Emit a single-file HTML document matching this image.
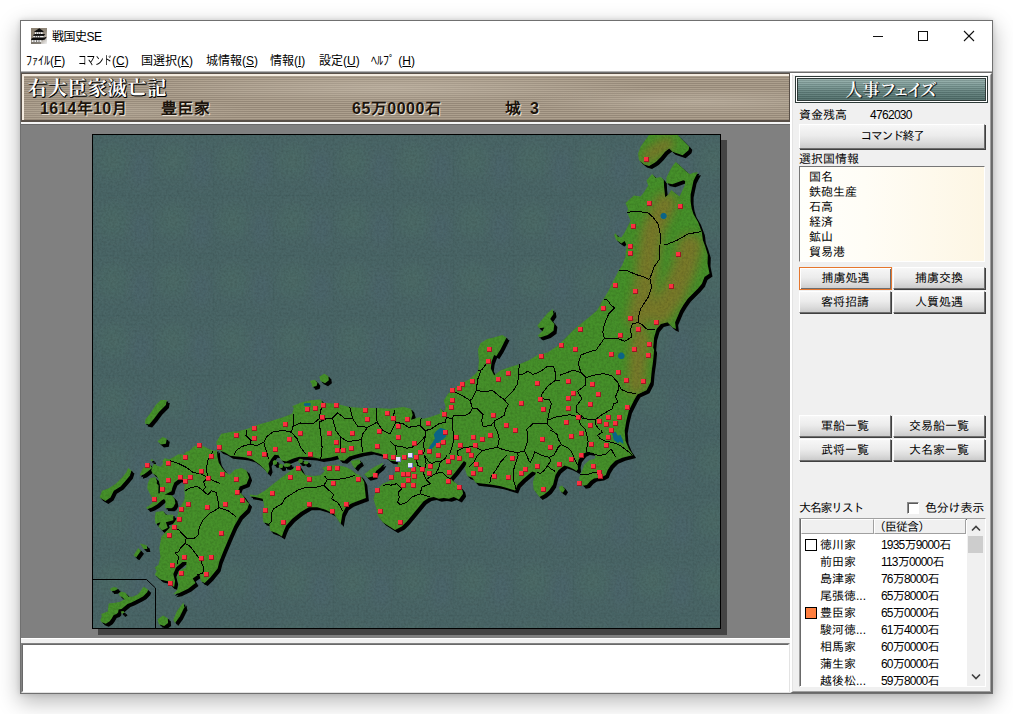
<!DOCTYPE html>
<html lang="ja">
<head>
<meta charset="utf-8">
<title>戦国史SE</title>
<style>
html,body{margin:0;padding:0;}
body{width:1013px;height:714px;background:#fff;overflow:hidden;position:relative;
 font-family:"Liberation Sans","IPAGothic","Noto Sans CJK JP",sans-serif;font-size:12px;line-height:12px;color:#000;}
.abs{position:absolute;}
#win{position:absolute;left:20px;top:20px;width:971px;height:672px;border:1px solid #707070;background:#fff;
 box-shadow:0 7px 20px 1px rgba(0,0,0,.28),0 0 5px rgba(0,0,0,.14);}
#c{position:absolute;left:-21px;top:-21px;width:1013px;height:714px;}
#title{left:52px;top:30px;font-size:12px;line-height:14px;letter-spacing:-.5px;font-family:"Liberation Sans","Noto Sans CJK JP",sans-serif;}
.menu{top:54px;font-size:12px;line-height:14px;white-space:nowrap;font-family:"Liberation Sans","Noto Sans CJK JP",sans-serif;}
.menu u{text-decoration:underline;}
#strip{left:21px;top:73px;width:770px;height:49px;box-sizing:border-box;overflow:hidden;
 background:
  radial-gradient(ellipse 260px 16px at 48% 30%,rgba(205,195,180,.5),rgba(205,195,180,0) 100%),
  radial-gradient(ellipse 140px 12px at 12% 80%,rgba(195,185,170,.3),rgba(195,185,170,0) 100%),
  radial-gradient(ellipse 180px 14px at 88% 60%,rgba(200,190,175,.45),rgba(200,190,175,0) 100%),
  repeating-linear-gradient(180deg,#ada08e 0,#ada08e 1px,#958878 1px,#958878 2px);
 border:solid #595048;border-width:1px 2px 2px 1px;}
#strip:before{content:"";position:absolute;left:0;top:0;right:0;bottom:0;border:solid #f3ebdf;border-width:2px 0 0 2px;}
.sh1{font-family:"Liberation Serif","Noto Serif CJK SC",serif;font-weight:700;font-size:19px;line-height:20px;color:#fff;
 text-shadow:1px 1px 0 #000,1px 0 0 #000,0 1px 0 #000;white-space:nowrap;}
.sh2{font-family:"Liberation Sans","IPAGothic","Noto Sans CJK JP",sans-serif;font-weight:bold;font-size:16px;line-height:16px;color:#1c140c;
 text-shadow:1px 1px 0 #e8e0d4;white-space:nowrap;}
#map-bg{left:21px;top:122px;width:769px;height:516px;background:#808080;box-sizing:border-box;border-top:2px solid #f4f4f4;}
#map-bg:before{content:"";position:absolute;left:0;right:0;top:0;height:1px;background:#6a6a6a;}
#split{left:21px;top:638px;width:769px;height:6px;background:#f0f0f0;border-top:1px solid #fff;box-sizing:border-box;}
#log{left:21px;top:643px;width:769px;height:50px;box-sizing:border-box;background:#fff;border:1px solid;border-color:#828282 #e3e3e3 #e3e3e3 #828282;}
#log:before{content:"";position:absolute;left:0;top:0;right:0;bottom:0;border:1px solid;border-color:#696969 #fff #fff #696969;}
#side{left:790px;top:73px;width:202px;height:620px;background:#f0f0f0;box-sizing:border-box;border:solid;border-width:1px 1px 1px 2px;border-color:#fff #696969 #696969 #fff;}
#side:before{content:"";position:absolute;left:0;top:0;right:0;bottom:0;border:1px solid;border-color:#fff #a0a0a0 #a0a0a0 #e3e3e3;}
.btn{position:absolute;box-sizing:border-box;border:1px solid;border-color:#fff #6d6d6d #6d6d6d #fff;
 background:linear-gradient(180deg,#f7f7f7 0,#ececec 45%,#dcdcdc 75%,#cbcbcb 100%);text-align:center;font-size:12px;line-height:20px;
 box-shadow:1px 1px 0 #404040;white-space:nowrap;}
.lbl{position:absolute;white-space:nowrap;font-size:12px;line-height:12px;}
#banner{left:795px;top:76px;width:193px;height:27px;box-sizing:border-box;border:1px solid #2e3a38;}
#banner i{position:absolute;left:0;top:0;right:0;bottom:0;border:1px solid #fff;
 background:repeating-linear-gradient(180deg,rgba(0,0,0,.10) 0,rgba(0,0,0,.10) 1px,rgba(255,255,255,.08) 1px,rgba(255,255,255,.08) 2px),
 linear-gradient(180deg,#97b1ad 0,#7f9d99 28%,#61807c 60%,#4b6965 100%);box-shadow:inset 0 0 0 1px #2e3a38;}
#banner b{position:absolute;left:0;right:4px;top:4px;text-align:center;font-family:"Liberation Serif","Noto Serif CJK SC",serif;font-weight:600;
 font-size:17px;line-height:20px;color:#fff;text-shadow:1px 1px 0 #1a2422,1px 0 0 #1a2422;}
#info{left:799px;top:166px;width:186px;height:96px;box-sizing:border-box;border:1px solid;border-color:#767676 #fff #fff #767676;
 background:linear-gradient(90deg,#fffffb 0,#fffdf6 35%,#fdf6e4 100%);}
#info div{position:absolute;left:9px;white-space:nowrap;}
#list{left:799px;top:518px;width:187px;height:169px;box-sizing:border-box;background:#fff;border:1px solid;border-color:#a0a0a0 #fff #fff #a0a0a0;box-shadow:inset 1px 1px 0 #696969;}
.hd{position:absolute;top:0;height:15px;box-sizing:border-box;background:#f0f0f0;border:1px solid;border-color:#fff #a0a0a0 #a0a0a0 #fff;white-space:nowrap;}
.row{position:absolute;left:0;width:168px;height:17px;white-space:nowrap;}
.row span{position:absolute;top:2px;line-height:13px;}
.row .nm{left:20px;}
.row .kk{left:81px;letter-spacing:-.8px;}
.row i{position:absolute;left:5px;top:2px;width:10px;height:10px;border:1px solid #000;background:#fff;}
#sb{left:967px;top:519px;width:18px;height:167px;background:#f0f0f0;}
#sb em{position:absolute;left:1px;top:17px;width:15px;height:17px;background:#cdcdcd;}
</style>
</head>
<body>
<div id="win"><div id="c">
 <svg class="abs" style="left:31px;top:28px" width="16" height="16" viewBox="0 0 16 16"><defs><linearGradient id="ig" x1="0" y1="0" x2="1" y2="1"><stop offset="0" stop-color="#8c8272"/><stop offset=".55" stop-color="#90877a"/><stop offset="1" stop-color="#f4f4f4"/></linearGradient></defs><rect width="16" height="16" fill="url(#ig)"/><path d="M8.3 .3 L12.8 3.6 L11.6 4.2 H4.2 L3 3.8 Z" fill="#0c0c0c"/><rect x="4" y="4.2" width="7.6" height="1.9" fill="#f2f2f2"/><path d="M5.6 4.4v1.5M7.6 4.4v1.5M9.4 4.4v1.5" stroke="#222" stroke-width=".6"/><path d="M2 7 L4 5.9 H12.4 L14.4 6.2 L12.6 7.9 H2.6 Z" fill="#0c0c0c"/><rect x="2.4" y="7.9" width="10" height="1.8" fill="#f2f2f2"/><path d="M4.4 8v1.6M6.4 8v1.6M8.6 8v1.6" stroke="#222" stroke-width=".6"/><path d="M0 11 L2.4 9.6 H13.4 L15.8 8.8 L14 11.4 L11 12.2 H.6 Z" fill="#0c0c0c"/><rect x=".8" y="12.1" width="9.6" height="1.9" fill="#eeeeee"/><path d="M3 12.2v1.8M5.6 12.2v1.8M8 12.2v1.8" stroke="#333" stroke-width=".7"/><rect x="0" y="14" width="10" height="2" fill="#77726a" opacity=".8"/></svg>
 <div class="abs" id="title">戦国史SE</div>
 <svg class="abs" style="left:860px;top:21px" width="131" height="30" viewBox="0 0 131 30"><g stroke="#111" stroke-width="1" fill="none" shape-rendering="crispEdges"><line x1="13" y1="15.5" x2="23" y2="15.5"/><rect x="58.5" y="10.5" width="9" height="9"/></g><g stroke="#111" stroke-width="1.1" fill="none"><line x1="104" y1="10" x2="114" y2="20"/><line x1="114" y1="10" x2="104" y2="20"/></g></svg>
 <div class="abs menu" style="left:26px">ﾌｧｲﾙ(<u>F</u>)</div>
 <div class="abs menu" style="left:78px"><span style="display:inline-block;width:34px;vertical-align:top"><span style="display:inline-block;transform:scaleX(.71);transform-origin:0 0">コマンド</span></span>(<u>C</u>)</div>
 <div class="abs menu" style="left:141px">国選択(<u>K</u>)</div>
 <div class="abs menu" style="left:206px">城情報(<u>S</u>)</div>
 <div class="abs menu" style="left:270px">情報(<u>I</u>)</div>
 <div class="abs menu" style="left:319px">設定(<u>U</u>)</div>
 <div class="abs menu" style="left:371px">ﾍﾙﾌﾟ (<u>H</u>)</div>
 <div class="abs" style="left:21px;top:71px;width:971px;height:2px;background:linear-gradient(180deg,#b4b4b4 0,#b4b4b4 50%,#6e6e6e 50%,#6e6e6e 100%)"></div>
 <div class="abs" id="strip">
  <div class="abs sh1" style="left:6px;top:5px;letter-spacing:.9px">右大臣家滅亡記</div>
  <div class="abs sh2" style="left:18px;top:27px;letter-spacing:.3px">1614年10月</div>
  <div class="abs sh2" style="left:139px;top:27px;letter-spacing:.5px">豊臣家</div>
  <div class="abs sh2" style="left:330px;top:27px;letter-spacing:.5px">65万0000石</div>
  <div class="abs sh2" style="left:483px;top:27px">城&nbsp; 3</div>
 </div>
 <div class="abs" id="map-bg"></div>
 <div class="abs" style="left:98px;top:140px;width:629px;height:495px;background:#444"></div>
 <div class="abs" style="left:92px;top:134px;width:629px;height:495px;background:#000"></div>
 <svg class="abs" id="map" style="left:93px;top:135px" width="627" height="493" viewBox="0 0 627 493">
<defs>
<filter id="nz" x="0" y="0" width="100%" height="100%"><feTurbulence type="fractalNoise" baseFrequency="0.45" numOctaves="2" seed="3" result="n"/><feColorMatrix type="matrix" values="0 0 0 0 0  0 0 0 0 0  0 0 0 0 0  1.2 0 0 0 -0.42"/><feComposite in2="SourceGraphic" operator="in"/></filter>
<filter id="bl" x="-50%" y="-50%" width="200%" height="200%"><feGaussianBlur stdDeviation="5"/></filter>
<pattern id="sea" width="60" height="60" patternUnits="userSpaceOnUse">
<rect width="60" height="60" fill="#4a6667"/>
<ellipse cx="20" cy="26" rx="15" ry="17" fill="#4e7266" opacity=".3" filter="url(#bl)"/>
<ellipse cx="48" cy="34" rx="9" ry="18" fill="#4f6576" opacity=".28" filter="url(#bl)"/>
<rect x="0" y="0" width="60" height="1" fill="#445f5f" opacity=".3"/><rect x="0" y="0" width="1" height="60" fill="#445f5f" opacity=".3"/>
</pattern>
<clipPath id="landclip">
<polygon points="559.1,39.0 562.8,42.9 567.8,42.0 570.8,44.9 571.1,52.1 572.2,62.2 575.3,59.7 578.2,55.1 582.9,58.8 586.6,61.4 591.7,50.6 592.2,45.9 590.2,45.2 579.3,49.3 573.4,48.1 573.4,42.7 577.3,34.8 580.3,29.9 582.8,26.9 588.2,31.8 594.1,37.3 597.1,39.2 600.1,37.8 605.0,37.3 603.0,40.7 600.5,45.7 599.1,52.6 597.6,59.5 597.6,66.4 598.6,73.3 600.5,79.2 605.0,87.1 606.4,90.8 608.9,97.5 609.8,105.0 612.3,111.7 614.8,120.1 614.5,128.5 616.5,138.6 611.5,142.0 608.9,148.7 604.7,153.7 599.7,158.8 594.7,163.8 590.5,169.7 587.1,175.6 584.6,181.4 582.1,187.3 582.9,194.0 579.5,192.4 574.5,187.3 567.8,189.0 563.6,194.0 561.1,202.4 560.2,212.5 561.1,215.0 560.2,225.1 558.6,236.8 557.7,246.9 553.5,255.3 544.3,259.5 540.9,265.4 535.9,275.5 533.4,285.6 531.7,295.6 532.5,305.7 535.9,314.1 540.1,320.0 529.4,322.8 522.3,325.8 517.6,330.5 514.6,335.3 512.8,340.0 508.1,342.4 501.0,343.6 497.4,345.9 493.9,350.1 489.7,350.7 486.8,345.9 486.2,342.4 487.9,338.8 489.7,334.1 491.5,329.4 496.2,325.2 502.2,323.4 501.9,319.9 500.4,318.1 493.9,316.9 490.3,318.7 488.9,320.5 485.8,324.6 484.6,329.4 485.0,334.1 483.4,336.1 480.8,334.3 476.1,332.0 471.4,330.5 465.4,335.3 462.5,340.0 461.3,344.8 460.1,349.5 456.0,355.4 451.2,359.6 446.5,361.9 440.6,354.2 440.0,347.1 441.7,341.2 442.9,337.7 439.4,336.5 437.0,338.2 429.7,344.5 424.7,349.5 422.1,355.4 416.3,353.7 407.9,351.2 397.8,349.5 391.1,348.7 382.7,347.8 379.3,342.8 374.3,341.1 371.8,333.6 373.4,327.7 370.9,326.0 367.6,330.2 362.5,336.9 357.5,342.8 359.2,345.3 365.9,350.4 369.2,354.6 370.1,358.8 365.9,364.6 360.8,362.1 355.8,363.8 350.8,363.0 345.7,363.8 340.7,362.1 335.6,363.0 330.6,366.3 325.6,372.2 318.8,380.6 313.8,386.5 308.8,391.5 302.0,394.9 296.4,391.5 289.7,387.3 284.7,380.6 283.0,372.2 280.5,363.8 283.0,355.4 289.7,348.7 298.1,345.3 301.5,338.6 304.8,331.9 304.8,326.8 299.8,326.0 297.0,325.8 295.0,324.1 288.3,319.1 278.2,316.6 268.1,318.2 256.3,321.6 251.3,325.8 246.3,324.9 244.6,320.8 237.9,322.4 227.8,324.1 221.1,322.4 214.1,322.1 206.2,321.7 200.3,323.6 193.4,326.6 188.5,325.6 185.5,320.2 181.6,319.7 178.6,323.6 175.6,328.6 176.6,334.5 174.6,338.4 171.7,334.5 166.7,329.6 159.8,324.6 152.9,322.6 147.0,321.7 143.8,321.6 137.1,320.8 132.0,317.4 127.0,315.7 124.1,312.1 123.3,307.1 128.3,298.7 138.4,297.0 133.7,297.2 143.8,296.4 153.9,293.9 162.3,290.5 177.4,286.3 190.8,282.1 199.2,278.8 200.9,272.9 199.2,271.2 207.6,267.8 217.7,265.3 227.8,264.5 229.5,267.8 242.9,268.7 256.3,272.0 269.8,272.9 283.2,272.9 297.0,273.7 310.4,272.1 318.0,273.8 319.7,279.7 318.0,284.7 326.4,282.2 329.8,283.9 337.3,281.9 347.4,278.5 346.9,273.0 351.1,277.5 352.8,272.1 350.8,265.4 355.0,258.7 360.8,254.5 367.6,248.6 376.0,244.4 382.7,238.5 385.2,235.2 386.0,225.1 385.8,224.9 385.0,214.2 387.5,208.3 394.2,204.1 400.9,202.4 409.3,199.9 413.5,202.4 411.0,207.5 407.6,214.2 403.4,220.9 401.1,220.0 398.6,226.8 397.8,233.5 401.1,240.2 407.9,235.2 417.9,231.8 426.3,229.3 436.4,225.1 444.8,220.0 454.7,217.5 464.7,210.8 473.1,202.4 481.5,194.0 489.9,187.3 497.0,181.4 504.0,175.6 510.7,163.8 515.7,155.4 520.8,145.3 525.8,135.2 529.2,130.2 532.5,121.8 533.4,110.0 531.7,105.9 528.3,108.4 523.3,105.0 521.1,100.0 522.4,98.3 525.0,101.7 528.3,102.5 531.7,97.5 534.2,92.4 537.6,85.7 534.2,77.3 535.0,74.0 532.5,68.1 540.9,60.5 547.6,61.4 551.0,57.2 555.2,50.4 553.5,45.4"/>
<polygon points="556.0,0.0 547.6,11.8 545.1,18.5 546.0,25.2 551.0,29.4 556.0,31.1 562.8,26.9 567.8,21.9 572.0,16.8 576.2,13.5 579.5,16.8 584.6,18.5 589.6,20.2 595.5,15.2 596.3,11.8 591.3,6.8 584.6,0.0"/>
<polygon points="157.0,359.6 163.7,360.4 172.1,355.4 180.5,348.7 190.6,341.1 199.0,334.4 205.7,330.2 209.1,336.9 212.4,340.3 220.8,341.1 227.6,340.3 231.8,336.1 229.2,332.7 236.0,330.2 244.4,330.2 252.8,331.9 257.8,334.4 262.8,338.6 267.9,341.1 271.2,347.0 272.1,355.4 272.9,363.0 266.2,365.5 257.8,368.8 252.8,372.2 249.4,378.9 247.7,389.0 244.4,384.0 241.0,378.9 232.6,374.7 224.2,372.2 215.8,372.2 207.4,377.2 199.0,384.0 193.1,390.7 190.6,396.6 188.9,401.6 183.9,398.2 177.2,395.7 176.3,389.0 170.4,387.3 169.6,378.9 171.3,370.5 169.6,363.8 162.0,362.1 157.0,361.3"/>
<polygon points="290.5,327.7 288.0,331.9 283.0,336.1 281.3,341.1 274.6,342.8 271.2,339.4 276.3,335.2 283.0,331.0"/>
<polygon points="257.8,326.0 266.2,324.3 267.9,327.7 264.5,330.2 262.0,333.6 259.5,330.2"/>
<polygon points="61.7,328.7 64.6,330.9 67.8,331.7 70.1,328.7 69.6,325.7 71.6,323.3 76.5,324.2 80.4,322.3 85.4,319.3 90.3,319.8 93.3,316.8 96.2,315.9 100.2,311.9 104.1,309.9 110.1,310.9 116.0,313.9 121.9,315.9 123.9,314.4 124.4,321.8 125.8,327.7 128.8,332.6 132.8,337.6 136.7,339.8 141.8,334.8 148.5,333.1 153.5,335.6 156.1,342.4 153.5,349.1 146.8,351.6 145.1,355.8 150.2,360.8 153.5,365.9 152.4,365.0 156.1,368.7 154.2,374.2 146.8,381.6 141.3,390.9 135.7,403.8 130.2,416.7 126.5,426.0 124.6,433.4 117.3,442.6 111.7,448.1 108.0,446.3 106.2,438.9 99.7,443.5 102.5,448.1 95.1,453.7 85.8,458.3 80.3,459.2 84.0,455.5 85.8,450.0 84.0,442.6 85.8,436.1 92.9,432.4 93.6,426.9 89.5,426.9 83.1,432.4 80.3,438.9 82.1,446.3 81.2,451.8 78.5,450.9 74.8,446.3 67.4,444.5 61.8,439.8 63.7,436.1 61.8,432.4 65.5,429.7 67.4,422.3 66.4,413.0 68.3,402.0 72.9,396.4 78.5,390.9 84.0,383.5 85.8,374.2 91.4,365.0 90.8,368.2 91.8,360.3 91.3,354.4 91.8,347.4 90.3,344.0 85.4,344.5 81.4,347.4 79.4,352.4 78.5,356.3 73.5,358.8 71.6,359.5 78.5,360.3 81.4,363.2 82.4,368.2 80.4,372.1 78.5,373.2 72.0,373.0 72.5,365.9 71.0,364.0 68.5,365.5 64.0,369.5 59.0,372.5 54.5,374.0 53.0,372.5 56.7,370.2 60.7,366.2 58.7,362.3 56.7,358.3 54.3,353.4 54.8,348.4 56.7,343.5 58.5,343.0 62.0,342.0 63.0,343.5 64.0,346.0 63.7,348.4 65.6,350.4 65.3,358.3 66.8,358.3 67.0,350.4 66.0,346.5 65.3,343.5 63.2,340.5 59.7,338.6 58.2,335.6 59.2,332.6 60.2,329.7"/>
<polygon points="67.9,265.1 73.8,265.1 72.9,270.1 66.2,276.8 61.2,283.6 56.1,289.4 51.9,288.6 52.4,284.4 57.8,277.7 62.8,270.1"/>
<polygon points="69.6,302.0 73.8,303.7 72.9,308.8 67.9,309.6 64.5,306.2"/>
<polygon points="35.1,333.1 38.5,335.6 36.8,340.7 32.6,345.7 27.6,351.6 20.8,355.8 17.5,362.5 12.4,365.9 6.6,362.5 9.1,355.8 15.8,353.3 22.5,349.1 29.2,342.4 33.4,337.3"/>
<polygon points="46.9,339.6 49.8,333.6 53.0,331.0 54.0,328.6 57.0,329.2 58.2,331.7 59.2,333.1 54.8,336.6 50.8,339.6 46.9,340.8"/>
<polygon points="62.7,377.0 70.1,376.1 72.9,379.8 80.3,379.8 80.3,385.3 72.9,387.2 74.8,392.7 69.2,395.5 65.5,391.8 67.4,387.2 62.7,389.0 61.8,383.5"/>
<polygon points="47.0,408.4 53.5,410.3 54.4,414.0 50.7,414.0"/>
<polygon points="45.2,413.0 48.0,415.8 43.3,422.3 40.6,420.4"/>
<polygon points="90.5,467.5 91.4,472.2 86.8,481.4 82.1,487.9 80.3,485.1 84.0,475.9"/>
<polygon points="70.1,480.5 74.8,483.3 75.1,487.9 71.1,491.0 65.9,489.2 64.6,484.2"/>
<polygon points="50.8,451.8 55.2,454.7 54.2,457.2 50.3,461.2 46.3,463.6 42.4,465.6 38.4,467.6 34.5,469.1 31.5,471.5 28.6,474.0 25.6,474.5 25.1,477.4 23.6,478.9 20.7,479.9 18.7,483.4 16.7,486.3 12.8,488.8 8.8,487.3 7.3,485.3 8.8,481.4 8.3,478.9 14.7,476.5 15.2,472.5 15.7,468.6 20.7,468.1 26.6,467.1 31.5,464.6 29.6,462.6 26.6,460.7 26.1,457.7 28.6,456.7 32.5,457.7 35.5,461.7 39.4,461.7 44.4,459.7 47.3,456.7 49.3,453.3"/>
<polygon points="17.2,453.8 20.7,452.0 24.1,452.8 24.6,454.2 21.7,455.7 18.2,455.9"/>
<polygon points="27.6,476.5 30.5,476.0 31.5,477.4 29.1,478.9"/>
<polygon points="459.7,173.9 460.5,178.9 457.2,184.0 461.4,189.0 460.5,195.7 454.7,199.9 447.1,202.4 444.6,200.8 449.6,195.7 451.3,192.4 446.3,193.2 444.3,190.7 449.6,184.0 454.7,178.1"/>
<polygon points="231.1,238.8 235.3,241.0 235.9,245.2 232.0,248.2 227.5,246.0 226.4,241.8"/>
<polygon points="216.9,246.0 221.9,244.8 224.4,247.7 223.6,251.0 219.4,251.9 218.6,248.5"/>
<polygon points="466.0,351.9 469.0,350.5 472.0,354.2 469.9,357.8 466.9,355.7"/>
<polygon points="179.8,326.5 181.3,325.0 184.2,326.0 183.8,329.0 182.0,330.0 180.0,329.2"/>
<polygon points="185.8,330.1 187.3,328.8 190.2,329.6 189.8,332.4 188.0,333.2 186.0,332.6"/>
<polygon points="190.8,329.2 193.2,328.0 197.8,328.8 197.1,331.2 194.3,332.0 191.2,331.4"/>
<polygon points="205.4,325.1 207.0,323.8 209.9,324.6 209.5,327.4 207.7,328.2 205.7,327.6"/>
<polygon points="210.5,326.9 212.2,325.9 215.5,326.6 215.0,328.7 213.0,329.4 210.8,328.8"/>
<polygon points="57.6,324.9 58.4,324.3 60.1,324.7 59.8,325.9 58.8,326.3 57.7,326.0"/>
</clipPath></defs>
<rect width="627" height="493" fill="url(#sea)"/>
<rect width="627" height="493" fill="#2f4a50" filter="url(#nz)" opacity=".18"/>
<g fill="#000">
<polygon points="562.1,42.0 565.8,45.9 570.8,45.0 573.8,47.9 574.1,55.1 575.2,65.2 578.3,62.7 581.2,58.1 585.9,61.8 589.6,64.4 594.7,53.6 595.2,48.9 593.2,48.2 582.3,52.3 576.4,51.1 576.4,45.7 580.3,37.8 583.3,32.9 585.8,29.9 591.2,34.8 597.1,40.3 600.1,42.2 603.1,40.8 608.0,40.3 606.0,43.7 603.5,48.7 602.1,55.6 600.6,62.5 600.6,69.4 601.6,76.3 603.5,82.2 608.0,90.1 609.4,93.8 611.9,100.5 612.8,108.0 615.3,114.7 617.8,123.1 617.5,131.5 619.5,141.6 614.5,145.0 611.9,151.7 607.7,156.7 602.7,161.8 597.7,166.8 593.5,172.7 590.1,178.6 587.6,184.4 585.1,190.3 585.9,197.0 582.5,195.4 577.5,190.3 570.8,192.0 566.6,197.0 564.1,205.4 563.2,215.5 564.1,218.0 563.2,228.1 561.6,239.8 560.7,249.9 556.5,258.3 547.3,262.5 543.9,268.4 538.9,278.5 536.4,288.6 534.7,298.6 535.5,308.7 538.9,317.1 543.1,323.0 532.4,325.8 525.3,328.8 520.6,333.5 517.6,338.3 515.8,343.0 511.1,345.4 504.0,346.6 500.4,348.9 496.9,353.1 492.7,353.7 489.8,348.9 489.2,345.4 490.9,341.8 492.7,337.1 494.5,332.4 499.2,328.2 505.2,326.4 504.9,322.9 503.4,321.1 496.9,319.9 493.3,321.7 491.9,323.5 488.8,327.6 487.6,332.4 488.0,337.1 486.4,339.1 483.8,337.3 479.1,335.0 474.4,333.5 468.4,338.3 465.5,343.0 464.3,347.8 463.1,352.5 459.0,358.4 454.2,362.6 449.5,364.9 443.6,357.2 443.0,350.1 444.7,344.2 445.9,340.7 442.4,339.5 440.0,341.2 432.7,347.5 427.7,352.5 425.1,358.4 419.3,356.7 410.9,354.2 400.8,352.5 394.1,351.7 385.7,350.8 382.3,345.8 377.3,344.1 374.8,336.6 376.4,330.7 373.9,329.0 370.6,333.2 365.5,339.9 360.5,345.8 362.2,348.3 368.9,353.4 372.2,357.6 373.1,361.8 368.9,367.6 363.8,365.1 358.8,366.8 353.8,366.0 348.7,366.8 343.7,365.1 338.6,366.0 333.6,369.3 328.6,375.2 321.8,383.6 316.8,389.5 311.8,394.5 305.0,397.9 299.4,394.5 292.7,390.3 287.7,383.6 286.0,375.2 283.5,366.8 286.0,358.4 292.7,351.7 301.1,348.3 304.5,341.6 307.8,334.9 307.8,329.8 302.8,329.0 300.0,328.8 298.0,327.1 291.3,322.1 281.2,319.6 271.1,321.2 259.3,324.6 254.3,328.8 249.3,327.9 247.6,323.8 240.9,325.4 230.8,327.1 224.1,325.4 217.1,325.1 209.2,324.7 203.3,326.6 196.4,329.6 191.5,328.6 188.5,323.2 184.6,322.7 181.6,326.6 178.6,331.6 179.6,337.5 177.6,341.4 174.7,337.5 169.7,332.6 162.8,327.6 155.9,325.6 150.0,324.7 146.8,324.6 140.1,323.8 135.0,320.4 130.0,318.7 127.1,315.1 126.3,310.1 131.3,301.7 141.4,300.0 136.7,300.2 146.8,299.4 156.9,296.9 165.3,293.5 180.4,289.3 193.8,285.1 202.2,281.8 203.9,275.9 202.2,274.2 210.6,270.8 220.7,268.3 230.8,267.5 232.5,270.8 245.9,271.7 259.3,275.0 272.8,275.9 286.2,275.9 300.0,276.7 313.4,275.1 321.0,276.8 322.7,282.7 321.0,287.7 329.4,285.2 332.8,286.9 340.3,284.9 350.4,281.5 349.9,276.0 354.1,280.5 355.8,275.1 353.8,268.4 358.0,261.7 363.8,257.5 370.6,251.6 379.0,247.4 385.7,241.5 388.2,238.2 389.0,228.1 388.8,227.9 388.0,217.2 390.5,211.3 397.2,207.1 403.9,205.4 412.3,202.9 416.5,205.4 414.0,210.5 410.6,217.2 406.4,223.9 404.1,223.0 401.6,229.8 400.8,236.5 404.1,243.2 410.9,238.2 420.9,234.8 429.3,232.3 439.4,228.1 447.8,223.0 457.7,220.5 467.7,213.8 476.1,205.4 484.5,197.0 492.9,190.3 500.0,184.4 507.0,178.6 513.7,166.8 518.7,158.4 523.8,148.3 528.8,138.2 532.2,133.2 535.5,124.8 536.4,113.0 534.7,108.9 531.3,111.4 526.3,108.0 524.1,103.0 525.4,101.3 528.0,104.7 531.3,105.5 534.7,100.5 537.2,95.4 540.6,88.7 537.2,80.3 538.0,77.0 535.5,71.1 543.9,63.5 550.6,64.4 554.0,60.2 558.2,53.4 556.5,48.4"/>
<polygon points="560.6,40.5 564.3,44.4 569.3,43.5 572.3,46.4 572.6,53.6 573.7,63.7 576.8,61.2 579.7,56.6 584.4,60.3 588.1,62.9 593.2,52.1 593.7,47.4 591.7,46.7 580.8,50.8 574.9,49.6 574.9,44.2 578.8,36.3 581.8,31.4 584.3,28.4 589.7,33.3 595.6,38.8 598.6,40.7 601.6,39.3 606.5,38.8 604.5,42.2 602.0,47.2 600.6,54.1 599.1,61.0 599.1,67.9 600.1,74.8 602.0,80.7 606.5,88.6 607.9,92.3 610.4,99.0 611.3,106.5 613.8,113.2 616.3,121.6 616.0,130.0 618.0,140.1 613.0,143.5 610.4,150.2 606.2,155.2 601.2,160.3 596.2,165.3 592.0,171.2 588.6,177.1 586.1,182.9 583.6,188.8 584.4,195.5 581.0,193.9 576.0,188.8 569.3,190.5 565.1,195.5 562.6,203.9 561.7,214.0 562.6,216.5 561.7,226.6 560.1,238.3 559.2,248.4 555.0,256.8 545.8,261.0 542.4,266.9 537.4,277.0 534.9,287.1 533.2,297.1 534.0,307.2 537.4,315.6 541.6,321.5 530.9,324.3 523.8,327.3 519.1,332.0 516.1,336.8 514.3,341.5 509.6,343.9 502.5,345.1 498.9,347.4 495.4,351.6 491.2,352.2 488.3,347.4 487.7,343.9 489.4,340.3 491.2,335.6 493.0,330.9 497.7,326.7 503.7,324.9 503.4,321.4 501.9,319.6 495.4,318.4 491.8,320.2 490.4,322.0 487.3,326.1 486.1,330.9 486.5,335.6 484.9,337.6 482.3,335.8 477.6,333.5 472.9,332.0 466.9,336.8 464.0,341.5 462.8,346.3 461.6,351.0 457.5,356.9 452.7,361.1 448.0,363.4 442.1,355.7 441.5,348.6 443.2,342.7 444.4,339.2 440.9,338.0 438.5,339.7 431.2,346.0 426.2,351.0 423.6,356.9 417.8,355.2 409.4,352.7 399.3,351.0 392.6,350.2 384.2,349.3 380.8,344.3 375.8,342.6 373.3,335.1 374.9,329.2 372.4,327.5 369.1,331.7 364.0,338.4 359.0,344.3 360.7,346.8 367.4,351.9 370.7,356.1 371.6,360.3 367.4,366.1 362.3,363.6 357.3,365.3 352.3,364.5 347.2,365.3 342.2,363.6 337.1,364.5 332.1,367.8 327.1,373.7 320.3,382.1 315.3,388.0 310.3,393.0 303.5,396.4 297.9,393.0 291.2,388.8 286.2,382.1 284.5,373.7 282.0,365.3 284.5,356.9 291.2,350.2 299.6,346.8 303.0,340.1 306.3,333.4 306.3,328.3 301.3,327.5 298.5,327.3 296.5,325.6 289.8,320.6 279.7,318.1 269.6,319.7 257.8,323.1 252.8,327.3 247.8,326.4 246.1,322.3 239.4,323.9 229.3,325.6 222.6,323.9 215.6,323.6 207.7,323.2 201.8,325.1 194.9,328.1 190.0,327.1 187.0,321.7 183.1,321.2 180.1,325.1 177.1,330.1 178.1,336.0 176.1,339.9 173.2,336.0 168.2,331.1 161.3,326.1 154.4,324.1 148.5,323.2 145.3,323.1 138.6,322.3 133.5,318.9 128.5,317.2 125.6,313.6 124.8,308.6 129.8,300.2 139.9,298.5 135.2,298.7 145.3,297.9 155.4,295.4 163.8,292.0 178.9,287.8 192.3,283.6 200.7,280.3 202.4,274.4 200.7,272.7 209.1,269.3 219.2,266.8 229.3,266.0 231.0,269.3 244.4,270.2 257.8,273.5 271.3,274.4 284.7,274.4 298.5,275.2 311.9,273.6 319.5,275.3 321.2,281.2 319.5,286.2 327.9,283.7 331.3,285.4 338.8,283.4 348.9,280.0 348.4,274.5 352.6,279.0 354.3,273.6 352.3,266.9 356.5,260.2 362.3,256.0 369.1,250.1 377.5,245.9 384.2,240.0 386.7,236.7 387.5,226.6 387.3,226.4 386.5,215.7 389.0,209.8 395.7,205.6 402.4,203.9 410.8,201.4 415.0,203.9 412.5,209.0 409.1,215.7 404.9,222.4 402.6,221.5 400.1,228.3 399.3,235.0 402.6,241.7 409.4,236.7 419.4,233.3 427.8,230.8 437.9,226.6 446.3,221.5 456.2,219.0 466.2,212.3 474.6,203.9 483.0,195.5 491.4,188.8 498.5,182.9 505.5,177.1 512.2,165.3 517.2,156.9 522.3,146.8 527.3,136.7 530.7,131.7 534.0,123.3 534.9,111.5 533.2,107.4 529.8,109.9 524.8,106.5 522.6,101.5 523.9,99.8 526.5,103.2 529.8,104.0 533.2,99.0 535.7,93.9 539.1,87.2 535.7,78.8 536.5,75.5 534.0,69.6 542.4,62.0 549.1,62.9 552.5,58.7 556.7,51.9 555.0,46.9"/>
<polygon points="559.0,3.0 550.6,14.8 548.1,21.5 549.0,28.2 554.0,32.4 559.0,34.1 565.8,29.9 570.8,24.9 575.0,19.8 579.2,16.5 582.5,19.8 587.6,21.5 592.6,23.2 598.5,18.2 599.3,14.8 594.3,9.8 587.6,3.0"/>
<polygon points="557.5,1.5 549.1,13.3 546.6,20.0 547.5,26.7 552.5,30.9 557.5,32.6 564.3,28.4 569.3,23.4 573.5,18.3 577.7,15.0 581.0,18.3 586.1,20.0 591.1,21.7 597.0,16.7 597.8,13.3 592.8,8.3 586.1,1.5"/>
<polygon points="160.0,362.6 166.7,363.4 175.1,358.4 183.5,351.7 193.6,344.1 202.0,337.4 208.7,333.2 212.1,339.9 215.4,343.3 223.8,344.1 230.6,343.3 234.8,339.1 232.2,335.7 239.0,333.2 247.4,333.2 255.8,334.9 260.8,337.4 265.8,341.6 270.9,344.1 274.2,350.0 275.1,358.4 275.9,366.0 269.2,368.5 260.8,371.8 255.8,375.2 252.4,381.9 250.7,392.0 247.4,387.0 244.0,381.9 235.6,377.7 227.2,375.2 218.8,375.2 210.4,380.2 202.0,387.0 196.1,393.7 193.6,399.6 191.9,404.6 186.9,401.2 180.2,398.7 179.3,392.0 173.4,390.3 172.6,381.9 174.3,373.5 172.6,366.8 165.0,365.1 160.0,364.3"/>
<polygon points="158.5,361.1 165.2,361.9 173.6,356.9 182.0,350.2 192.1,342.6 200.5,335.9 207.2,331.7 210.6,338.4 213.9,341.8 222.3,342.6 229.1,341.8 233.3,337.6 230.7,334.2 237.5,331.7 245.9,331.7 254.3,333.4 259.3,335.9 264.3,340.1 269.4,342.6 272.7,348.5 273.6,356.9 274.4,364.5 267.7,367.0 259.3,370.3 254.3,373.7 250.9,380.4 249.2,390.5 245.9,385.5 242.5,380.4 234.1,376.2 225.7,373.7 217.3,373.7 208.9,378.7 200.5,385.5 194.6,392.2 192.1,398.1 190.4,403.1 185.4,399.7 178.7,397.2 177.8,390.5 171.9,388.8 171.1,380.4 172.8,372.0 171.1,365.3 163.5,363.6 158.5,362.8"/>
<polygon points="293.5,330.7 291.0,334.9 286.0,339.1 284.3,344.1 277.6,345.8 274.2,342.4 279.3,338.2 286.0,334.0"/>
<polygon points="292.0,329.2 289.5,333.4 284.5,337.6 282.8,342.6 276.1,344.3 272.7,340.9 277.8,336.7 284.5,332.5"/>
<polygon points="260.8,329.0 269.2,327.3 270.9,330.7 267.5,333.2 265.0,336.6 262.5,333.2"/>
<polygon points="259.3,327.5 267.7,325.8 269.4,329.2 266.0,331.7 263.5,335.1 261.0,331.7"/>
<polygon points="64.7,331.7 67.6,333.9 70.8,334.7 73.1,331.7 72.6,328.7 74.6,326.3 79.5,327.2 83.4,325.3 88.4,322.3 93.3,322.8 96.3,319.8 99.2,318.9 103.2,314.9 107.1,312.9 113.1,313.9 119.0,316.9 124.9,318.9 126.9,317.4 127.4,324.8 128.8,330.7 131.8,335.6 135.8,340.6 139.7,342.8 144.8,337.8 151.5,336.1 156.5,338.6 159.1,345.4 156.5,352.1 149.8,354.6 148.1,358.8 153.2,363.8 156.5,368.9 155.4,368.0 159.1,371.7 157.2,377.2 149.8,384.6 144.3,393.9 138.7,406.8 133.2,419.7 129.5,429.0 127.6,436.4 120.3,445.6 114.7,451.1 111.0,449.3 109.2,441.9 102.7,446.5 105.5,451.1 98.1,456.7 88.8,461.3 83.3,462.2 87.0,458.5 88.8,453.0 87.0,445.6 88.8,439.1 95.9,435.4 96.6,429.9 92.5,429.9 86.1,435.4 83.3,441.9 85.1,449.3 84.2,454.8 81.5,453.9 77.8,449.3 70.4,447.5 64.8,442.8 66.7,439.1 64.8,435.4 68.5,432.7 70.4,425.3 69.4,416.0 71.3,405.0 75.9,399.4 81.5,393.9 87.0,386.5 88.8,377.2 94.4,368.0 93.8,371.2 94.8,363.3 94.3,357.4 94.8,350.4 93.3,347.0 88.4,347.5 84.4,350.4 82.4,355.4 81.5,359.3 76.5,361.8 74.6,362.5 81.5,363.3 84.4,366.2 85.4,371.2 83.4,375.1 81.5,376.2 75.0,376.0 75.5,368.9 74.0,367.0 71.5,368.5 67.0,372.5 62.0,375.5 57.5,377.0 56.0,375.5 59.7,373.2 63.7,369.2 61.7,365.3 59.7,361.3 57.3,356.4 57.8,351.4 59.7,346.5 61.5,346.0 65.0,345.0 66.0,346.5 67.0,349.0 66.7,351.4 68.6,353.4 68.3,361.3 69.8,361.3 70.0,353.4 69.0,349.5 68.3,346.5 66.2,343.5 62.7,341.6 61.2,338.6 62.2,335.6 63.2,332.7"/>
<polygon points="63.2,330.2 66.1,332.4 69.3,333.2 71.6,330.2 71.1,327.2 73.1,324.8 78.0,325.7 81.9,323.8 86.9,320.8 91.8,321.3 94.8,318.3 97.7,317.4 101.7,313.4 105.6,311.4 111.6,312.4 117.5,315.4 123.4,317.4 125.4,315.9 125.9,323.3 127.3,329.2 130.3,334.1 134.3,339.1 138.2,341.3 143.3,336.3 150.0,334.6 155.0,337.1 157.6,343.9 155.0,350.6 148.3,353.1 146.6,357.3 151.7,362.3 155.0,367.4 153.9,366.5 157.6,370.2 155.7,375.7 148.3,383.1 142.8,392.4 137.2,405.3 131.7,418.2 128.0,427.5 126.1,434.9 118.8,444.1 113.2,449.6 109.5,447.8 107.7,440.4 101.2,445.0 104.0,449.6 96.6,455.2 87.3,459.8 81.8,460.7 85.5,457.0 87.3,451.5 85.5,444.1 87.3,437.6 94.4,433.9 95.1,428.4 91.0,428.4 84.6,433.9 81.8,440.4 83.6,447.8 82.7,453.3 80.0,452.4 76.3,447.8 68.9,446.0 63.3,441.3 65.2,437.6 63.3,433.9 67.0,431.2 68.9,423.8 67.9,414.5 69.8,403.5 74.4,397.9 80.0,392.4 85.5,385.0 87.3,375.7 92.9,366.5 92.3,369.7 93.3,361.8 92.8,355.9 93.3,348.9 91.8,345.5 86.9,346.0 82.9,348.9 80.9,353.9 80.0,357.8 75.0,360.3 73.1,361.0 80.0,361.8 82.9,364.7 83.9,369.7 81.9,373.6 80.0,374.7 73.5,374.5 74.0,367.4 72.5,365.5 70.0,367.0 65.5,371.0 60.5,374.0 56.0,375.5 54.5,374.0 58.2,371.7 62.2,367.7 60.2,363.8 58.2,359.8 55.8,354.9 56.3,349.9 58.2,345.0 60.0,344.5 63.5,343.5 64.5,345.0 65.5,347.5 65.2,349.9 67.1,351.9 66.8,359.8 68.3,359.8 68.5,351.9 67.5,348.0 66.8,345.0 64.7,342.0 61.2,340.1 59.7,337.1 60.7,334.1 61.7,331.2"/>
<polygon points="70.9,268.1 76.8,268.1 75.9,273.1 69.2,279.8 64.2,286.6 59.1,292.4 54.9,291.6 55.4,287.4 60.8,280.7 65.8,273.1"/>
<polygon points="69.4,266.6 75.3,266.6 74.4,271.6 67.7,278.3 62.7,285.1 57.6,290.9 53.4,290.1 53.9,285.9 59.3,279.2 64.3,271.6"/>
<polygon points="72.6,305.0 76.8,306.7 75.9,311.8 70.9,312.6 67.5,309.2"/>
<polygon points="71.1,303.5 75.3,305.2 74.4,310.3 69.4,311.1 66.0,307.7"/>
<polygon points="38.1,336.1 41.5,338.6 39.8,343.7 35.6,348.7 30.6,354.6 23.8,358.8 20.5,365.5 15.4,368.9 9.6,365.5 12.1,358.8 18.8,356.3 25.5,352.1 32.2,345.4 36.4,340.3"/>
<polygon points="36.6,334.6 40.0,337.1 38.3,342.2 34.1,347.2 29.1,353.1 22.3,357.3 19.0,364.0 13.9,367.4 8.1,364.0 10.6,357.3 17.3,354.8 24.0,350.6 30.7,343.9 34.9,338.8"/>
<polygon points="49.9,342.6 52.8,336.6 56.0,334.0 57.0,331.6 60.0,332.2 61.2,334.7 62.2,336.1 57.8,339.6 53.8,342.6 49.9,343.8"/>
<polygon points="48.4,341.1 51.3,335.1 54.5,332.5 55.5,330.1 58.5,330.7 59.7,333.2 60.7,334.6 56.3,338.1 52.3,341.1 48.4,342.3"/>
<polygon points="65.7,380.0 73.1,379.1 75.9,382.8 83.3,382.8 83.3,388.3 75.9,390.2 77.8,395.7 72.2,398.5 68.5,394.8 70.4,390.2 65.7,392.0 64.8,386.5"/>
<polygon points="64.2,378.5 71.6,377.6 74.4,381.3 81.8,381.3 81.8,386.8 74.4,388.7 76.3,394.2 70.7,397.0 67.0,393.3 68.9,388.7 64.2,390.5 63.3,385.0"/>
<polygon points="50.0,411.4 56.5,413.3 57.4,417.0 53.7,417.0"/>
<polygon points="48.5,409.9 55.0,411.8 55.9,415.5 52.2,415.5"/>
<polygon points="48.2,416.0 51.0,418.8 46.3,425.3 43.6,423.4"/>
<polygon points="46.7,414.5 49.5,417.3 44.8,423.8 42.1,421.9"/>
<polygon points="93.5,470.5 94.4,475.2 89.8,484.4 85.1,490.9 83.3,488.1 87.0,478.9"/>
<polygon points="92.0,469.0 92.9,473.7 88.3,482.9 83.6,489.4 81.8,486.6 85.5,477.4"/>
<polygon points="73.1,483.5 77.8,486.3 78.1,490.9 74.1,494.0 68.9,492.2 67.6,487.2"/>
<polygon points="71.6,482.0 76.3,484.8 76.6,489.4 72.6,492.5 67.4,490.7 66.1,485.7"/>
<polygon points="53.8,454.8 58.2,457.7 57.2,460.2 53.3,464.2 49.3,466.6 45.4,468.6 41.4,470.6 37.5,472.1 34.5,474.5 31.6,477.0 28.6,477.5 28.1,480.4 26.6,481.9 23.7,482.9 21.7,486.4 19.7,489.3 15.8,491.8 11.8,490.3 10.3,488.3 11.8,484.4 11.3,481.9 17.7,479.5 18.2,475.5 18.7,471.6 23.7,471.1 29.6,470.1 34.5,467.6 32.6,465.6 29.6,463.7 29.1,460.7 31.6,459.7 35.5,460.7 38.5,464.7 42.4,464.7 47.4,462.7 50.3,459.7 52.3,456.3"/>
<polygon points="52.3,453.3 56.7,456.2 55.7,458.7 51.8,462.7 47.8,465.1 43.9,467.1 39.9,469.1 36.0,470.6 33.0,473.0 30.1,475.5 27.1,476.0 26.6,478.9 25.1,480.4 22.2,481.4 20.2,484.9 18.2,487.8 14.3,490.3 10.3,488.8 8.8,486.8 10.3,482.9 9.8,480.4 16.2,478.0 16.7,474.0 17.2,470.1 22.2,469.6 28.1,468.6 33.0,466.1 31.1,464.1 28.1,462.2 27.6,459.2 30.1,458.2 34.0,459.2 37.0,463.2 40.9,463.2 45.9,461.2 48.8,458.2 50.8,454.8"/>
<polygon points="20.2,456.8 23.7,455.0 27.1,455.8 27.6,457.2 24.7,458.7 21.2,458.9"/>
<polygon points="18.7,455.3 22.2,453.5 25.6,454.3 26.1,455.7 23.2,457.2 19.7,457.4"/>
<polygon points="30.6,479.5 33.5,479.0 34.5,480.4 32.1,481.9"/>
<polygon points="29.1,478.0 32.0,477.5 33.0,478.9 30.6,480.4"/>
<polygon points="462.7,176.9 463.5,181.9 460.2,187.0 464.4,192.0 463.5,198.7 457.7,202.9 450.1,205.4 447.6,203.8 452.6,198.7 454.3,195.4 449.3,196.2 447.3,193.7 452.6,187.0 457.7,181.1"/>
<polygon points="461.2,175.4 462.0,180.4 458.7,185.5 462.9,190.5 462.0,197.2 456.2,201.4 448.6,203.9 446.1,202.3 451.1,197.2 452.8,193.9 447.8,194.7 445.8,192.2 451.1,185.5 456.2,179.6"/>
<polygon points="234.1,241.8 238.3,244.0 238.9,248.2 235.0,251.2 230.5,249.0 229.4,244.8"/>
<polygon points="232.6,240.3 236.8,242.5 237.4,246.7 233.5,249.7 229.0,247.5 227.9,243.3"/>
<polygon points="219.9,249.0 224.9,247.8 227.4,250.7 226.6,254.0 222.4,254.9 221.6,251.5"/>
<polygon points="218.4,247.5 223.4,246.3 225.9,249.2 225.1,252.5 220.9,253.4 220.1,250.0"/>
<polygon points="469.0,354.9 472.0,353.5 475.0,357.2 472.9,360.8 469.9,358.7"/>
<polygon points="467.5,353.4 470.5,352.0 473.5,355.7 471.4,359.3 468.4,357.2"/>
<polygon points="182.8,329.5 184.3,328.0 187.2,329.0 186.8,332.0 185.0,333.0 183.0,332.2"/>
<polygon points="181.2,328.0 182.8,326.5 185.8,327.5 185.3,330.5 183.5,331.5 181.5,330.8"/>
<polygon points="188.8,333.1 190.3,331.8 193.2,332.6 192.8,335.4 191.0,336.2 189.0,335.6"/>
<polygon points="187.2,331.6 188.8,330.2 191.8,331.1 191.3,333.9 189.5,334.8 187.5,334.1"/>
<polygon points="193.8,332.2 196.2,331.0 200.8,331.8 200.1,334.2 197.3,335.0 194.2,334.4"/>
<polygon points="192.3,330.7 194.8,329.5 199.3,330.3 198.6,332.7 195.8,333.5 192.7,332.9"/>
<polygon points="208.4,328.1 210.0,326.8 212.9,327.6 212.5,330.4 210.7,331.2 208.7,330.6"/>
<polygon points="206.9,326.6 208.5,325.2 211.4,326.1 211.0,328.9 209.2,329.8 207.2,329.1"/>
<polygon points="213.5,329.9 215.2,328.9 218.5,329.6 218.0,331.7 216.0,332.4 213.8,331.8"/>
<polygon points="212.0,328.4 213.8,327.4 217.0,328.1 216.5,330.2 214.5,330.9 212.2,330.3"/>
<polygon points="60.6,327.9 61.4,327.3 63.1,327.7 62.8,328.9 61.8,329.3 60.7,329.0"/>
<polygon points="59.1,326.4 59.9,325.8 61.6,326.2 61.3,327.4 60.3,327.8 59.2,327.5"/>
</g>
<g fill="#46912a">
<polygon points="559.1,39.0 562.8,42.9 567.8,42.0 570.8,44.9 571.1,52.1 572.2,62.2 575.3,59.7 578.2,55.1 582.9,58.8 586.6,61.4 591.7,50.6 592.2,45.9 590.2,45.2 579.3,49.3 573.4,48.1 573.4,42.7 577.3,34.8 580.3,29.9 582.8,26.9 588.2,31.8 594.1,37.3 597.1,39.2 600.1,37.8 605.0,37.3 603.0,40.7 600.5,45.7 599.1,52.6 597.6,59.5 597.6,66.4 598.6,73.3 600.5,79.2 605.0,87.1 606.4,90.8 608.9,97.5 609.8,105.0 612.3,111.7 614.8,120.1 614.5,128.5 616.5,138.6 611.5,142.0 608.9,148.7 604.7,153.7 599.7,158.8 594.7,163.8 590.5,169.7 587.1,175.6 584.6,181.4 582.1,187.3 582.9,194.0 579.5,192.4 574.5,187.3 567.8,189.0 563.6,194.0 561.1,202.4 560.2,212.5 561.1,215.0 560.2,225.1 558.6,236.8 557.7,246.9 553.5,255.3 544.3,259.5 540.9,265.4 535.9,275.5 533.4,285.6 531.7,295.6 532.5,305.7 535.9,314.1 540.1,320.0 529.4,322.8 522.3,325.8 517.6,330.5 514.6,335.3 512.8,340.0 508.1,342.4 501.0,343.6 497.4,345.9 493.9,350.1 489.7,350.7 486.8,345.9 486.2,342.4 487.9,338.8 489.7,334.1 491.5,329.4 496.2,325.2 502.2,323.4 501.9,319.9 500.4,318.1 493.9,316.9 490.3,318.7 488.9,320.5 485.8,324.6 484.6,329.4 485.0,334.1 483.4,336.1 480.8,334.3 476.1,332.0 471.4,330.5 465.4,335.3 462.5,340.0 461.3,344.8 460.1,349.5 456.0,355.4 451.2,359.6 446.5,361.9 440.6,354.2 440.0,347.1 441.7,341.2 442.9,337.7 439.4,336.5 437.0,338.2 429.7,344.5 424.7,349.5 422.1,355.4 416.3,353.7 407.9,351.2 397.8,349.5 391.1,348.7 382.7,347.8 379.3,342.8 374.3,341.1 371.8,333.6 373.4,327.7 370.9,326.0 367.6,330.2 362.5,336.9 357.5,342.8 359.2,345.3 365.9,350.4 369.2,354.6 370.1,358.8 365.9,364.6 360.8,362.1 355.8,363.8 350.8,363.0 345.7,363.8 340.7,362.1 335.6,363.0 330.6,366.3 325.6,372.2 318.8,380.6 313.8,386.5 308.8,391.5 302.0,394.9 296.4,391.5 289.7,387.3 284.7,380.6 283.0,372.2 280.5,363.8 283.0,355.4 289.7,348.7 298.1,345.3 301.5,338.6 304.8,331.9 304.8,326.8 299.8,326.0 297.0,325.8 295.0,324.1 288.3,319.1 278.2,316.6 268.1,318.2 256.3,321.6 251.3,325.8 246.3,324.9 244.6,320.8 237.9,322.4 227.8,324.1 221.1,322.4 214.1,322.1 206.2,321.7 200.3,323.6 193.4,326.6 188.5,325.6 185.5,320.2 181.6,319.7 178.6,323.6 175.6,328.6 176.6,334.5 174.6,338.4 171.7,334.5 166.7,329.6 159.8,324.6 152.9,322.6 147.0,321.7 143.8,321.6 137.1,320.8 132.0,317.4 127.0,315.7 124.1,312.1 123.3,307.1 128.3,298.7 138.4,297.0 133.7,297.2 143.8,296.4 153.9,293.9 162.3,290.5 177.4,286.3 190.8,282.1 199.2,278.8 200.9,272.9 199.2,271.2 207.6,267.8 217.7,265.3 227.8,264.5 229.5,267.8 242.9,268.7 256.3,272.0 269.8,272.9 283.2,272.9 297.0,273.7 310.4,272.1 318.0,273.8 319.7,279.7 318.0,284.7 326.4,282.2 329.8,283.9 337.3,281.9 347.4,278.5 346.9,273.0 351.1,277.5 352.8,272.1 350.8,265.4 355.0,258.7 360.8,254.5 367.6,248.6 376.0,244.4 382.7,238.5 385.2,235.2 386.0,225.1 385.8,224.9 385.0,214.2 387.5,208.3 394.2,204.1 400.9,202.4 409.3,199.9 413.5,202.4 411.0,207.5 407.6,214.2 403.4,220.9 401.1,220.0 398.6,226.8 397.8,233.5 401.1,240.2 407.9,235.2 417.9,231.8 426.3,229.3 436.4,225.1 444.8,220.0 454.7,217.5 464.7,210.8 473.1,202.4 481.5,194.0 489.9,187.3 497.0,181.4 504.0,175.6 510.7,163.8 515.7,155.4 520.8,145.3 525.8,135.2 529.2,130.2 532.5,121.8 533.4,110.0 531.7,105.9 528.3,108.4 523.3,105.0 521.1,100.0 522.4,98.3 525.0,101.7 528.3,102.5 531.7,97.5 534.2,92.4 537.6,85.7 534.2,77.3 535.0,74.0 532.5,68.1 540.9,60.5 547.6,61.4 551.0,57.2 555.2,50.4 553.5,45.4"/>
<polygon points="556.0,0.0 547.6,11.8 545.1,18.5 546.0,25.2 551.0,29.4 556.0,31.1 562.8,26.9 567.8,21.9 572.0,16.8 576.2,13.5 579.5,16.8 584.6,18.5 589.6,20.2 595.5,15.2 596.3,11.8 591.3,6.8 584.6,0.0"/>
<polygon points="157.0,359.6 163.7,360.4 172.1,355.4 180.5,348.7 190.6,341.1 199.0,334.4 205.7,330.2 209.1,336.9 212.4,340.3 220.8,341.1 227.6,340.3 231.8,336.1 229.2,332.7 236.0,330.2 244.4,330.2 252.8,331.9 257.8,334.4 262.8,338.6 267.9,341.1 271.2,347.0 272.1,355.4 272.9,363.0 266.2,365.5 257.8,368.8 252.8,372.2 249.4,378.9 247.7,389.0 244.4,384.0 241.0,378.9 232.6,374.7 224.2,372.2 215.8,372.2 207.4,377.2 199.0,384.0 193.1,390.7 190.6,396.6 188.9,401.6 183.9,398.2 177.2,395.7 176.3,389.0 170.4,387.3 169.6,378.9 171.3,370.5 169.6,363.8 162.0,362.1 157.0,361.3"/>
<polygon points="290.5,327.7 288.0,331.9 283.0,336.1 281.3,341.1 274.6,342.8 271.2,339.4 276.3,335.2 283.0,331.0"/>
<polygon points="257.8,326.0 266.2,324.3 267.9,327.7 264.5,330.2 262.0,333.6 259.5,330.2"/>
<polygon points="61.7,328.7 64.6,330.9 67.8,331.7 70.1,328.7 69.6,325.7 71.6,323.3 76.5,324.2 80.4,322.3 85.4,319.3 90.3,319.8 93.3,316.8 96.2,315.9 100.2,311.9 104.1,309.9 110.1,310.9 116.0,313.9 121.9,315.9 123.9,314.4 124.4,321.8 125.8,327.7 128.8,332.6 132.8,337.6 136.7,339.8 141.8,334.8 148.5,333.1 153.5,335.6 156.1,342.4 153.5,349.1 146.8,351.6 145.1,355.8 150.2,360.8 153.5,365.9 152.4,365.0 156.1,368.7 154.2,374.2 146.8,381.6 141.3,390.9 135.7,403.8 130.2,416.7 126.5,426.0 124.6,433.4 117.3,442.6 111.7,448.1 108.0,446.3 106.2,438.9 99.7,443.5 102.5,448.1 95.1,453.7 85.8,458.3 80.3,459.2 84.0,455.5 85.8,450.0 84.0,442.6 85.8,436.1 92.9,432.4 93.6,426.9 89.5,426.9 83.1,432.4 80.3,438.9 82.1,446.3 81.2,451.8 78.5,450.9 74.8,446.3 67.4,444.5 61.8,439.8 63.7,436.1 61.8,432.4 65.5,429.7 67.4,422.3 66.4,413.0 68.3,402.0 72.9,396.4 78.5,390.9 84.0,383.5 85.8,374.2 91.4,365.0 90.8,368.2 91.8,360.3 91.3,354.4 91.8,347.4 90.3,344.0 85.4,344.5 81.4,347.4 79.4,352.4 78.5,356.3 73.5,358.8 71.6,359.5 78.5,360.3 81.4,363.2 82.4,368.2 80.4,372.1 78.5,373.2 72.0,373.0 72.5,365.9 71.0,364.0 68.5,365.5 64.0,369.5 59.0,372.5 54.5,374.0 53.0,372.5 56.7,370.2 60.7,366.2 58.7,362.3 56.7,358.3 54.3,353.4 54.8,348.4 56.7,343.5 58.5,343.0 62.0,342.0 63.0,343.5 64.0,346.0 63.7,348.4 65.6,350.4 65.3,358.3 66.8,358.3 67.0,350.4 66.0,346.5 65.3,343.5 63.2,340.5 59.7,338.6 58.2,335.6 59.2,332.6 60.2,329.7"/>
<polygon points="67.9,265.1 73.8,265.1 72.9,270.1 66.2,276.8 61.2,283.6 56.1,289.4 51.9,288.6 52.4,284.4 57.8,277.7 62.8,270.1"/>
<polygon points="69.6,302.0 73.8,303.7 72.9,308.8 67.9,309.6 64.5,306.2"/>
<polygon points="35.1,333.1 38.5,335.6 36.8,340.7 32.6,345.7 27.6,351.6 20.8,355.8 17.5,362.5 12.4,365.9 6.6,362.5 9.1,355.8 15.8,353.3 22.5,349.1 29.2,342.4 33.4,337.3"/>
<polygon points="46.9,339.6 49.8,333.6 53.0,331.0 54.0,328.6 57.0,329.2 58.2,331.7 59.2,333.1 54.8,336.6 50.8,339.6 46.9,340.8"/>
<polygon points="62.7,377.0 70.1,376.1 72.9,379.8 80.3,379.8 80.3,385.3 72.9,387.2 74.8,392.7 69.2,395.5 65.5,391.8 67.4,387.2 62.7,389.0 61.8,383.5"/>
<polygon points="47.0,408.4 53.5,410.3 54.4,414.0 50.7,414.0"/>
<polygon points="45.2,413.0 48.0,415.8 43.3,422.3 40.6,420.4"/>
<polygon points="90.5,467.5 91.4,472.2 86.8,481.4 82.1,487.9 80.3,485.1 84.0,475.9"/>
<polygon points="70.1,480.5 74.8,483.3 75.1,487.9 71.1,491.0 65.9,489.2 64.6,484.2"/>
<polygon points="50.8,451.8 55.2,454.7 54.2,457.2 50.3,461.2 46.3,463.6 42.4,465.6 38.4,467.6 34.5,469.1 31.5,471.5 28.6,474.0 25.6,474.5 25.1,477.4 23.6,478.9 20.7,479.9 18.7,483.4 16.7,486.3 12.8,488.8 8.8,487.3 7.3,485.3 8.8,481.4 8.3,478.9 14.7,476.5 15.2,472.5 15.7,468.6 20.7,468.1 26.6,467.1 31.5,464.6 29.6,462.6 26.6,460.7 26.1,457.7 28.6,456.7 32.5,457.7 35.5,461.7 39.4,461.7 44.4,459.7 47.3,456.7 49.3,453.3"/>
<polygon points="17.2,453.8 20.7,452.0 24.1,452.8 24.6,454.2 21.7,455.7 18.2,455.9"/>
<polygon points="27.6,476.5 30.5,476.0 31.5,477.4 29.1,478.9"/>
<polygon points="459.7,173.9 460.5,178.9 457.2,184.0 461.4,189.0 460.5,195.7 454.7,199.9 447.1,202.4 444.6,200.8 449.6,195.7 451.3,192.4 446.3,193.2 444.3,190.7 449.6,184.0 454.7,178.1"/>
<polygon points="231.1,238.8 235.3,241.0 235.9,245.2 232.0,248.2 227.5,246.0 226.4,241.8"/>
<polygon points="216.9,246.0 221.9,244.8 224.4,247.7 223.6,251.0 219.4,251.9 218.6,248.5"/>
<polygon points="466.0,351.9 469.0,350.5 472.0,354.2 469.9,357.8 466.9,355.7"/>
<polygon points="179.8,326.5 181.3,325.0 184.2,326.0 183.8,329.0 182.0,330.0 180.0,329.2"/>
<polygon points="185.8,330.1 187.3,328.8 190.2,329.6 189.8,332.4 188.0,333.2 186.0,332.6"/>
<polygon points="190.8,329.2 193.2,328.0 197.8,328.8 197.1,331.2 194.3,332.0 191.2,331.4"/>
<polygon points="205.4,325.1 207.0,323.8 209.9,324.6 209.5,327.4 207.7,328.2 205.7,327.6"/>
<polygon points="210.5,326.9 212.2,325.9 215.5,326.6 215.0,328.7 213.0,329.4 210.8,328.8"/>
<polygon points="57.6,324.9 58.4,324.3 60.1,324.7 59.8,325.9 58.8,326.3 57.7,326.0"/>
</g>
<g clip-path="url(#landclip)"><g filter="url(#bl)" fill="none" stroke="#87742c" stroke-linecap="round" stroke-linejoin="round" opacity=".78">
<polyline stroke-width="14" points="556.0,21.0 565.0,14.0 574.0,9.0"/>
<polyline stroke-width="22" points="572.0,69.0 560.0,94.0 555.0,123.0 552.0,153.0 545.0,183.0"/>
<polyline stroke-width="24" points="597.0,111.0 591.0,134.0 580.0,159.0 567.0,178.0"/>
<polyline stroke-width="18" points="548.0,203.0 545.0,225.0 543.0,251.0"/>
</g>
<rect width="627" height="493" fill="#1d4a10" filter="url(#nz)" opacity=".22"/>
</g>
<g fill="#0b6487">
<polygon points="347.5,292.8 352.5,294.5 353.1,301.8 349.7,304.6 345.2,307.4 341.9,310.8 338.5,314.1 335.7,314.3 336.8,311.3 339.6,307.4 341.9,303.5 340.8,299.6 343.0,296.2"/>
<polygon points="519.1,298.2 522.4,296.5 525.0,300.7 527.5,299.8 530.0,305.7 530.5,309.1 526.6,306.6 525.0,308.2 520.8,304.9"/>
<polygon points="211.0,268.3 217.7,268.0 217.7,270.7 211.3,271.0"/>
<polygon points="573.8,81.0 573.2,82.9 571.6,84.1 569.7,84.1 568.1,82.9 567.4,81.0 568.1,79.1 569.7,78.0 571.6,78.0 573.2,79.1"/>
<polygon points="531.7,220.9 531.1,222.9 529.4,224.1 527.3,224.1 525.6,222.9 524.9,220.9 525.6,218.9 527.3,217.6 529.4,217.6 531.1,218.9"/>
</g>
<g fill="none" stroke="#000" stroke-width="1" stroke-linejoin="round" shape-rendering="crispEdges">
<polyline points="534.2,77.3 540.9,76.5 554.4,77.3 560.2,82.4 565.3,89.1 567.3,99.1 567.0,109.9"/>
<polyline points="571.1,109.9 574.5,109.2 584.6,105.0 594.7,99.1 608.1,96.6"/>
<polyline points="566.4,110.2 566.1,111.7 566.9,123.5 561.1,131.9 556.9,143.6 558.6,152.0 555.2,162.1 547.6,173.9 545.1,184.0 545.1,187.3"/>
<polyline points="526.1,135.2 534.2,135.6 542.6,139.4 551.0,142.0 556.0,144.5"/>
<polyline points="510.7,163.8 514.9,165.5 517.4,169.7 521.6,173.0 515.7,178.9 511.5,189.0 509.8,197.4 511.5,203.3"/>
<polyline points="545.1,187.3 539.2,189.0 537.6,194.0 538.4,202.4 531.7,206.3 524.1,203.3 511.5,203.3 507.3,209.1 503.1,215.0 493.9,217.5 488.5,219.9"/>
<polyline points="545.1,187.3 549.3,189.8 553.5,194.0 561.9,194.9"/>
<polyline points="488.0,220.0 485.1,228.4 488.0,237.7 493.0,242.7 500.6,240.2 510.7,238.5 519.1,241.0 525.0,247.8 528.3,254.5 534.2,257.0 543.4,259.0"/>
<polyline points="467.0,240.2 473.7,237.7 480.4,235.2 488.0,237.7"/>
<polyline points="493.0,242.7 492.2,250.3 484.6,256.2 488.8,263.7 483.8,270.4 483.8,277.2 492.2,283.9 502.3,284.7"/>
<polyline points="525.0,247.8 525.8,253.6 522.4,262.0 525.0,267.1 520.8,268.8 519.1,273.8 509.0,279.7 502.3,284.7 503.1,290.6 506.9,294.9"/>
<polyline points="467.0,281.4 477.1,279.7 486.0,282.0 492.2,283.9"/>
<polyline points="486.0,283.9 487.2,288.9 492.2,294.0 492.4,294.9"/>
<polyline points="385.2,235.2 387.7,236.0 384.4,245.2 383.5,255.3 379.3,263.7 376.8,265.4 369.2,260.4 361.7,257.0"/>
<polyline points="393.6,228.4 388.6,235.2"/>
<polyline points="383.5,255.3 391.1,257.0 399.5,255.3 405.3,260.4 411.2,264.6 415.4,269.6 412.9,273.8 411.2,280.5 402.0,285.6 397.8,290.6 390.2,291.4 388.6,285.6 390.2,279.7 384.4,273.8 379.3,273.0 377.6,267.1 376.8,265.4"/>
<polyline points="426.3,229.3 425.5,240.2 424.7,248.6 420.5,255.3 411.2,264.6"/>
<polyline points="425.5,240.2 431.4,238.5 434.7,236.0 439.8,239.4 444.8,237.7 448.2,236.0 454.9,231.0 460.8,231.8 462.5,238.5 462.5,245.2 467.0,245.2"/>
<polyline points="462.5,245.2 454.9,251.1 449.0,258.7 448.2,263.7 456.6,264.6 458.3,268.8 455.7,278.8 454.1,288.9 439.8,288.9 433.9,294.0 434.7,305.7 431.4,315.8 424.7,317.5 417.9,316.6 408.7,314.1 404.5,312.4 406.2,304.0 404.5,297.3 402.0,292.3 401.1,286.4"/>
<polyline points="454.1,285.6 461.6,282.2 467.0,281.4"/>
<polyline points="454.1,288.9 459.9,294.8"/>
<polyline points="379.3,273.0 377.6,277.2 372.6,280.5 360.8,280.5 359.2,283.9 353.3,282.2"/>
<polyline points="359.2,283.9 360.0,295.6 360.8,305.7 358.3,314.1 356.7,319.5"/>
<polyline points="404.5,312.4 395.3,314.1 389.4,315.8 385.4,319.8"/>
<polyline points="367.6,314.1 370.9,312.4 381.0,311.6 389.4,315.8"/>
<polyline points="367.6,314.1 364.2,315.8 365.0,319.7"/>
<polyline points="302.0,275.5 300.4,280.5 302.9,287.2 298.7,295.6 297.0,299.0"/>
<polyline points="302.9,287.2 310.4,288.9 315.5,292.3 327.2,290.6 328.1,283.0"/>
<polyline points="327.2,290.6 332.3,295.6 333.1,299.0 330.6,309.1 331.4,315.8 330.6,319.1"/>
<polyline points="332.3,295.6 338.2,294.0 345.7,288.9 352.4,287.2 353.3,282.2"/>
<polyline points="302.0,310.8 308.8,311.6 313.8,313.3 318.8,312.4 324.7,309.1 329.8,304.0 332.3,300.7"/>
<polyline points="297.0,305.7 302.0,310.8 303.7,317.5 303.2,319.5"/>
<polyline points="431.4,315.8 433.4,319.9"/>
<polyline points="424.7,317.5 424.7,319.5"/>
<polyline points="200.1,278.8 200.9,287.2 198.4,297.2 204.3,304.0 207.6,312.4 212.7,319.1"/>
<polyline points="198.4,297.2 190.8,295.6 180.8,296.4 174.0,301.4 170.7,307.3 173.2,315.7 175.7,324.1"/>
<polyline points="153.9,294.7 153.0,300.6 158.1,305.6 157.2,309.0 148.8,311.5 143.0,315.7 141.3,319.9"/>
<polyline points="157.2,309.0 164.0,310.7 170.7,307.3"/>
<polyline points="198.4,292.2 207.6,288.0 214.4,288.8 221.1,288.0 226.1,283.8 227.8,275.4 229.5,268.7"/>
<polyline points="226.1,287.2 227.8,298.9 229.1,312.4 227.8,324.1"/>
<polyline points="226.1,287.2 234.5,283.0 239.5,283.0 244.6,277.9 251.3,283.0 259.7,283.8 258.0,277.1 256.7,272.0"/>
<polyline points="239.5,283.0 242.9,295.6 247.9,302.3 254.7,306.5 268.1,304.8 269.8,298.9 274.8,292.2 264.7,291.4 259.7,283.8"/>
<polyline points="247.9,302.3 247.1,314.0"/>
<polyline points="268.1,304.8 269.8,317.4"/>
<polyline points="274.8,292.2 284.1,287.2 283.2,272.9"/>
<polyline points="284.1,287.2 289.9,295.6 297.0,298.9"/>
<polyline points="77.1,325.6 86.4,328.9 93.1,332.3 99.8,337.3 108.2,339.0 114.9,342.4"/>
<polyline points="119.9,316.3 114.9,325.6 113.2,334.0 114.9,342.4 119.9,345.7 126.7,348.2"/>
<polyline points="114.9,342.4 110.7,346.6 112.4,352.4 109.9,355.8 104.8,351.6 98.1,352.4 92.2,355.8"/>
<polyline points="109.9,355.8 114.9,360.0 118.3,355.8 123.3,357.5 125.0,365.9 125.4,369.9"/>
<polyline points="125.3,370.3 125.6,372.4 135.7,376.1 143.1,381.6"/>
<polyline points="125.6,373.3 117.3,377.9 109.9,385.3 106.2,392.7 105.2,400.1 100.6,403.8 93.2,402.9 89.5,399.2 85.8,394.6 81.2,392.7"/>
<polyline points="93.2,402.9 92.3,408.4 87.7,413.0 85.8,416.7 82.1,417.7 85.8,422.3 84.0,428.7"/>
<polyline points="92.3,408.4 96.9,411.2 102.5,418.6 108.0,426.0 110.8,433.4 109.9,438.0 104.3,439.8"/>
<polyline points="231.8,341.1 234.3,344.5 230.9,350.4 224.2,352.0 214.1,352.0 205.7,354.6 199.0,358.8 192.3,363.0 188.9,368.8 180.5,373.9 178.0,378.9 178.0,387.3 176.3,389.0"/>
<polyline points="234.3,344.5 244.4,344.5 254.4,342.8 262.0,340.3"/>
<polyline points="230.9,350.4 236.0,355.4 241.0,359.6 238.5,363.8 244.4,367.2 247.7,372.2 249.4,375.6"/>
<polyline points="296.6,349.0 289.7,350.4"/>
<polyline points="331.4,320.1 335.6,326.8 339.0,328.5 344.0,326.0 347.4,326.8 345.7,333.6 342.4,338.6 337.3,342.0 333.1,344.5 330.6,338.6 333.1,328.5 331.4,320.1"/>
<polyline points="323.0,323.5 324.7,330.2 330.6,333.6"/>
<polyline points="333.1,344.5 337.3,348.7 328.9,352.0 327.2,358.8 318.8,362.1 313.8,367.2 307.1,369.7 304.6,367.2 306.2,362.1 305.4,357.1 308.8,353.7 303.7,348.7 297.0,350.4"/>
<polyline points="327.2,358.8 337.3,362.1"/>
<polyline points="342.4,338.6 349.1,336.9 354.1,342.0 357.5,343.6"/>
<polyline points="347.4,326.8 352.4,323.5 353.7,320.2"/>
<polyline points="365.1,320.4 365.9,323.5 369.2,326.0"/>
<polyline points="384.4,320.1 381.0,326.8 376.0,331.9"/>
<polyline points="413.9,320.0 407.9,326.8 402.8,335.2 397.8,342.0 396.9,347.8"/>
<polyline points="425.5,320.1 423.0,326.8 420.5,335.2 420.5,345.3 423.0,353.7"/>
<polyline points="433.6,320.3 436.4,326.8 437.0,326.0"/>
<polyline points="457.1,295.0 460.7,296.8 464.3,299.7 465.4,304.5 468.4,309.8 474.9,312.8 478.5,316.3 480.8,322.3 483.2,327.0 484.4,330.5"/>
<polyline points="468.4,309.8 465.4,311.6 462.5,317.5 460.7,320.5 456.0,322.3 448.8,320.5 445.3,318.7 441.7,316.9 440.0,322.3 437.0,327.6"/>
<polyline points="456.0,322.3 457.7,325.8 454.8,330.5 456.5,332.9 461.9,336.2"/>
<polyline points="454.8,330.5 451.2,335.3 447.7,338.2 443.5,337.7"/>
<polyline points="492.7,295.0 493.9,300.9 495.1,306.8 493.9,312.8 493.3,316.9"/>
<polyline points="493.3,316.9 499.8,318.7 505.7,320.5 512.8,319.3 516.4,315.7 518.2,314.0 522.3,321.7"/>
<polyline points="508.1,295.0 509.3,297.4 504.5,300.3 506.9,303.3 512.8,306.3 519.9,307.4 527.0,310.4 534.2,315.7 538.7,319.6"/>
<polyline points="487.4,339.1 493.9,339.8 501.0,337.4 505.7,337.7"/>
</g>
<polyline fill="none" stroke="#000" stroke-width="1" points="0,444.5 53.5,444.5 62.5,453 62.5,493"/>
<g>
<rect x="551" y="22" width="5" height="5" fill="#9c1824"/><rect x="551" y="22" width="4" height="4" fill="#fb303f"/>
<rect x="554" y="66" width="5" height="5" fill="#9c1824"/><rect x="554" y="66" width="4" height="4" fill="#fb303f"/>
<rect x="585" y="69" width="5" height="5" fill="#9c1824"/><rect x="585" y="69" width="4" height="4" fill="#fb303f"/>
<rect x="538" y="89" width="5" height="5" fill="#9c1824"/><rect x="538" y="89" width="4" height="4" fill="#fb303f"/>
<rect x="535" y="109" width="5" height="5" fill="#9c1824"/><rect x="535" y="109" width="4" height="4" fill="#fb303f"/>
<rect x="535" y="116" width="5" height="5" fill="#9c1824"/><rect x="535" y="116" width="4" height="4" fill="#fb303f"/>
<rect x="583" y="117" width="5" height="5" fill="#9c1824"/><rect x="583" y="117" width="4" height="4" fill="#fb303f"/>
<rect x="520" y="148" width="5" height="5" fill="#9c1824"/><rect x="520" y="148" width="4" height="4" fill="#fb303f"/>
<rect x="540" y="154" width="5" height="5" fill="#9c1824"/><rect x="540" y="154" width="4" height="4" fill="#fb303f"/>
<rect x="576" y="149" width="5" height="5" fill="#9c1824"/><rect x="576" y="149" width="4" height="4" fill="#fb303f"/>
<rect x="508" y="171" width="5" height="5" fill="#9c1824"/><rect x="508" y="171" width="4" height="4" fill="#fb303f"/>
<rect x="535" y="181" width="5" height="5" fill="#9c1824"/><rect x="535" y="181" width="4" height="4" fill="#fb303f"/>
<rect x="561" y="185" width="5" height="5" fill="#9c1824"/><rect x="561" y="185" width="4" height="4" fill="#fb303f"/>
<rect x="485" y="192" width="5" height="5" fill="#9c1824"/><rect x="485" y="192" width="4" height="4" fill="#fb303f"/>
<rect x="543" y="192" width="5" height="5" fill="#9c1824"/><rect x="543" y="192" width="4" height="4" fill="#fb303f"/>
<rect x="525" y="198" width="5" height="5" fill="#9c1824"/><rect x="525" y="198" width="4" height="4" fill="#fb303f"/>
<rect x="466" y="208" width="5" height="5" fill="#9c1824"/><rect x="466" y="208" width="4" height="4" fill="#fb303f"/>
<rect x="480" y="212" width="5" height="5" fill="#9c1824"/><rect x="480" y="212" width="4" height="4" fill="#fb303f"/>
<rect x="554" y="207" width="5" height="5" fill="#9c1824"/><rect x="554" y="207" width="4" height="4" fill="#fb303f"/>
<rect x="539" y="212" width="5" height="5" fill="#9c1824"/><rect x="539" y="212" width="4" height="4" fill="#fb303f"/>
<rect x="516" y="217" width="5" height="5" fill="#9c1824"/><rect x="516" y="217" width="4" height="4" fill="#fb303f"/>
<rect x="553" y="218" width="5" height="5" fill="#9c1824"/><rect x="553" y="218" width="4" height="4" fill="#fb303f"/>
<rect x="523" y="235" width="5" height="5" fill="#9c1824"/><rect x="523" y="235" width="4" height="4" fill="#fb303f"/>
<rect x="531" y="243" width="5" height="5" fill="#9c1824"/><rect x="531" y="243" width="4" height="4" fill="#fb303f"/>
<rect x="548" y="244" width="5" height="5" fill="#9c1824"/><rect x="548" y="244" width="4" height="4" fill="#fb303f"/>
<rect x="473" y="244" width="5" height="5" fill="#9c1824"/><rect x="473" y="244" width="4" height="4" fill="#fb303f"/>
<rect x="497" y="247" width="5" height="5" fill="#9c1824"/><rect x="497" y="247" width="4" height="4" fill="#fb303f"/>
<rect x="478" y="256" width="5" height="5" fill="#9c1824"/><rect x="478" y="256" width="4" height="4" fill="#fb303f"/>
<rect x="473" y="261" width="5" height="5" fill="#9c1824"/><rect x="473" y="261" width="4" height="4" fill="#fb303f"/>
<rect x="503" y="257" width="5" height="5" fill="#9c1824"/><rect x="503" y="257" width="4" height="4" fill="#fb303f"/>
<rect x="495" y="267" width="5" height="5" fill="#9c1824"/><rect x="495" y="267" width="4" height="4" fill="#fb303f"/>
<rect x="473" y="271" width="5" height="5" fill="#9c1824"/><rect x="473" y="271" width="4" height="4" fill="#fb303f"/>
<rect x="532" y="270" width="5" height="5" fill="#9c1824"/><rect x="532" y="270" width="4" height="4" fill="#fb303f"/>
<rect x="483" y="280" width="5" height="5" fill="#9c1824"/><rect x="483" y="280" width="4" height="4" fill="#fb303f"/>
<rect x="471" y="285" width="5" height="5" fill="#9c1824"/><rect x="471" y="285" width="4" height="4" fill="#fb303f"/>
<rect x="513" y="280" width="5" height="5" fill="#9c1824"/><rect x="513" y="280" width="4" height="4" fill="#fb303f"/>
<rect x="524" y="280" width="5" height="5" fill="#9c1824"/><rect x="524" y="280" width="4" height="4" fill="#fb303f"/>
<rect x="504" y="284" width="5" height="5" fill="#9c1824"/><rect x="504" y="284" width="4" height="4" fill="#fb303f"/>
<rect x="495" y="288" width="5" height="5" fill="#9c1824"/><rect x="495" y="288" width="4" height="4" fill="#fb303f"/>
<rect x="511" y="287" width="5" height="5" fill="#9c1824"/><rect x="511" y="287" width="4" height="4" fill="#fb303f"/>
<rect x="520" y="286" width="5" height="5" fill="#9c1824"/><rect x="520" y="286" width="4" height="4" fill="#fb303f"/>
<rect x="516" y="293" width="5" height="5" fill="#9c1824"/><rect x="516" y="293" width="4" height="4" fill="#fb303f"/>
<rect x="476" y="299" width="5" height="5" fill="#9c1824"/><rect x="476" y="299" width="4" height="4" fill="#fb303f"/>
<rect x="486" y="296" width="5" height="5" fill="#9c1824"/><rect x="486" y="296" width="4" height="4" fill="#fb303f"/>
<rect x="513" y="300" width="5" height="5" fill="#9c1824"/><rect x="513" y="300" width="4" height="4" fill="#fb303f"/>
<rect x="496" y="307" width="5" height="5" fill="#9c1824"/><rect x="496" y="307" width="4" height="4" fill="#fb303f"/>
<rect x="511" y="308" width="5" height="5" fill="#9c1824"/><rect x="511" y="308" width="4" height="4" fill="#fb303f"/>
<rect x="486" y="318" width="5" height="5" fill="#9c1824"/><rect x="486" y="318" width="4" height="4" fill="#fb303f"/>
<rect x="476" y="322" width="5" height="5" fill="#9c1824"/><rect x="476" y="322" width="4" height="4" fill="#fb303f"/>
<rect x="498" y="329" width="5" height="5" fill="#9c1824"/><rect x="498" y="329" width="4" height="4" fill="#fb303f"/>
<rect x="464" y="327" width="5" height="5" fill="#9c1824"/><rect x="464" y="327" width="4" height="4" fill="#fb303f"/>
<rect x="394" y="212" width="5" height="5" fill="#9c1824"/><rect x="394" y="212" width="4" height="4" fill="#fb303f"/>
<rect x="393" y="224" width="5" height="5" fill="#9c1824"/><rect x="393" y="224" width="4" height="4" fill="#fb303f"/>
<rect x="446" y="219" width="5" height="5" fill="#9c1824"/><rect x="446" y="219" width="4" height="4" fill="#fb303f"/>
<rect x="413" y="236" width="5" height="5" fill="#9c1824"/><rect x="413" y="236" width="4" height="4" fill="#fb303f"/>
<rect x="403" y="242" width="5" height="5" fill="#9c1824"/><rect x="403" y="242" width="4" height="4" fill="#fb303f"/>
<rect x="377" y="244" width="5" height="5" fill="#9c1824"/><rect x="377" y="244" width="4" height="4" fill="#fb303f"/>
<rect x="367" y="247" width="5" height="5" fill="#9c1824"/><rect x="367" y="247" width="4" height="4" fill="#fb303f"/>
<rect x="364" y="251" width="5" height="5" fill="#9c1824"/><rect x="364" y="251" width="4" height="4" fill="#fb303f"/>
<rect x="357" y="253" width="5" height="5" fill="#9c1824"/><rect x="357" y="253" width="4" height="4" fill="#fb303f"/>
<rect x="442" y="246" width="5" height="5" fill="#9c1824"/><rect x="442" y="246" width="4" height="4" fill="#fb303f"/>
<rect x="357" y="263" width="5" height="5" fill="#9c1824"/><rect x="357" y="263" width="4" height="4" fill="#fb303f"/>
<rect x="445" y="262" width="5" height="5" fill="#9c1824"/><rect x="445" y="262" width="4" height="4" fill="#fb303f"/>
<rect x="356" y="270" width="5" height="5" fill="#9c1824"/><rect x="356" y="270" width="4" height="4" fill="#fb303f"/>
<rect x="426" y="266" width="5" height="5" fill="#9c1824"/><rect x="426" y="266" width="4" height="4" fill="#fb303f"/>
<rect x="448" y="272" width="5" height="5" fill="#9c1824"/><rect x="448" y="272" width="4" height="4" fill="#fb303f"/>
<rect x="349" y="277" width="5" height="5" fill="#9c1824"/><rect x="349" y="277" width="4" height="4" fill="#fb303f"/>
<rect x="398" y="278" width="5" height="5" fill="#9c1824"/><rect x="398" y="278" width="4" height="4" fill="#fb303f"/>
<rect x="298" y="281" width="5" height="5" fill="#9c1824"/><rect x="298" y="281" width="4" height="4" fill="#fb303f"/>
<rect x="312" y="282" width="5" height="5" fill="#9c1824"/><rect x="312" y="282" width="4" height="4" fill="#fb303f"/>
<rect x="333" y="286" width="5" height="5" fill="#9c1824"/><rect x="333" y="286" width="4" height="4" fill="#fb303f"/>
<rect x="303" y="289" width="5" height="5" fill="#9c1824"/><rect x="303" y="289" width="4" height="4" fill="#fb303f"/>
<rect x="411" y="288" width="5" height="5" fill="#9c1824"/><rect x="411" y="288" width="4" height="4" fill="#fb303f"/>
<rect x="420" y="293" width="5" height="5" fill="#9c1824"/><rect x="420" y="293" width="4" height="4" fill="#fb303f"/>
<rect x="350" y="295" width="5" height="5" fill="#9c1824"/><rect x="350" y="295" width="4" height="4" fill="#fb303f"/>
<rect x="303" y="300" width="5" height="5" fill="#9c1824"/><rect x="303" y="300" width="4" height="4" fill="#fb303f"/>
<rect x="361" y="300" width="5" height="5" fill="#9c1824"/><rect x="361" y="300" width="4" height="4" fill="#fb303f"/>
<rect x="378" y="300" width="5" height="5" fill="#9c1824"/><rect x="378" y="300" width="4" height="4" fill="#fb303f"/>
<rect x="387" y="302" width="5" height="5" fill="#9c1824"/><rect x="387" y="302" width="4" height="4" fill="#fb303f"/>
<rect x="395" y="298" width="5" height="5" fill="#9c1824"/><rect x="395" y="298" width="4" height="4" fill="#fb303f"/>
<rect x="447" y="302" width="5" height="5" fill="#9c1824"/><rect x="447" y="302" width="4" height="4" fill="#fb303f"/>
<rect x="319" y="306" width="5" height="5" fill="#9c1824"/><rect x="319" y="306" width="4" height="4" fill="#fb303f"/>
<rect x="348" y="305" width="5" height="5" fill="#9c1824"/><rect x="348" y="305" width="4" height="4" fill="#fb303f"/>
<rect x="343" y="308" width="5" height="5" fill="#9c1824"/><rect x="343" y="308" width="4" height="4" fill="#fb303f"/>
<rect x="365" y="308" width="5" height="5" fill="#9c1824"/><rect x="365" y="308" width="4" height="4" fill="#fb303f"/>
<rect x="380" y="308" width="5" height="5" fill="#9c1824"/><rect x="380" y="308" width="4" height="4" fill="#fb303f"/>
<rect x="455" y="310" width="5" height="5" fill="#9c1824"/><rect x="455" y="310" width="4" height="4" fill="#fb303f"/>
<rect x="334" y="314" width="5" height="5" fill="#9c1824"/><rect x="334" y="314" width="4" height="4" fill="#fb303f"/>
<rect x="325" y="315" width="5" height="5" fill="#9c1824"/><rect x="325" y="315" width="4" height="4" fill="#fb303f"/>
<rect x="373" y="313" width="5" height="5" fill="#9c1824"/><rect x="373" y="313" width="4" height="4" fill="#fb303f"/>
<rect x="376" y="318" width="5" height="5" fill="#9c1824"/><rect x="376" y="318" width="4" height="4" fill="#fb303f"/>
<rect x="343" y="318" width="5" height="5" fill="#9c1824"/><rect x="343" y="318" width="4" height="4" fill="#fb303f"/>
<rect x="357" y="320" width="5" height="5" fill="#9c1824"/><rect x="357" y="320" width="4" height="4" fill="#fb303f"/>
<rect x="364" y="321" width="5" height="5" fill="#9c1824"/><rect x="364" y="321" width="4" height="4" fill="#fb303f"/>
<rect x="417" y="321" width="5" height="5" fill="#9c1824"/><rect x="417" y="321" width="4" height="4" fill="#fb303f"/>
<rect x="298" y="320" width="5" height="5" fill="#9c1824"/><rect x="298" y="320" width="4" height="4" fill="#fb303f"/>
<rect x="309" y="320" width="5" height="5" fill="#9c1824"/><rect x="309" y="320" width="4" height="4" fill="#fb303f"/>
<rect x="321" y="320" width="5" height="5" fill="#9c1824"/><rect x="321" y="320" width="4" height="4" fill="#fb303f"/>
<rect x="353" y="324" width="5" height="5" fill="#9c1824"/><rect x="353" y="324" width="4" height="4" fill="#fb303f"/>
<rect x="381" y="327" width="5" height="5" fill="#9c1824"/><rect x="381" y="327" width="4" height="4" fill="#fb303f"/>
<rect x="335" y="329" width="5" height="5" fill="#9c1824"/><rect x="335" y="329" width="4" height="4" fill="#fb303f"/>
<rect x="442" y="329" width="5" height="5" fill="#9c1824"/><rect x="442" y="329" width="4" height="4" fill="#fb303f"/>
<rect x="302" y="332" width="5" height="5" fill="#9c1824"/><rect x="302" y="332" width="4" height="4" fill="#fb303f"/>
<rect x="318" y="332" width="5" height="5" fill="#9c1824"/><rect x="318" y="332" width="4" height="4" fill="#fb303f"/>
<rect x="327" y="332" width="5" height="5" fill="#9c1824"/><rect x="327" y="332" width="4" height="4" fill="#fb303f"/>
<rect x="385" y="332" width="5" height="5" fill="#9c1824"/><rect x="385" y="332" width="4" height="4" fill="#fb303f"/>
<rect x="430" y="332" width="5" height="5" fill="#9c1824"/><rect x="430" y="332" width="4" height="4" fill="#fb303f"/>
<rect x="228" y="268" width="5" height="5" fill="#9c1824"/><rect x="228" y="268" width="4" height="4" fill="#fb303f"/>
<rect x="241" y="268" width="5" height="5" fill="#9c1824"/><rect x="241" y="268" width="4" height="4" fill="#fb303f"/>
<rect x="212" y="272" width="5" height="5" fill="#9c1824"/><rect x="212" y="272" width="4" height="4" fill="#fb303f"/>
<rect x="220" y="271" width="5" height="5" fill="#9c1824"/><rect x="220" y="271" width="4" height="4" fill="#fb303f"/>
<rect x="270" y="273" width="5" height="5" fill="#9c1824"/><rect x="270" y="273" width="4" height="4" fill="#fb303f"/>
<rect x="292" y="276" width="5" height="5" fill="#9c1824"/><rect x="292" y="276" width="4" height="4" fill="#fb303f"/>
<rect x="227" y="280" width="5" height="5" fill="#9c1824"/><rect x="227" y="280" width="4" height="4" fill="#fb303f"/>
<rect x="272" y="282" width="5" height="5" fill="#9c1824"/><rect x="272" y="282" width="4" height="4" fill="#fb303f"/>
<rect x="190" y="287" width="5" height="5" fill="#9c1824"/><rect x="190" y="287" width="4" height="4" fill="#fb303f"/>
<rect x="159" y="291" width="5" height="5" fill="#9c1824"/><rect x="159" y="291" width="4" height="4" fill="#fb303f"/>
<rect x="141" y="298" width="5" height="5" fill="#9c1824"/><rect x="141" y="298" width="4" height="4" fill="#fb303f"/>
<rect x="159" y="301" width="5" height="5" fill="#9c1824"/><rect x="159" y="301" width="4" height="4" fill="#fb303f"/>
<rect x="205" y="296" width="5" height="5" fill="#9c1824"/><rect x="205" y="296" width="4" height="4" fill="#fb303f"/>
<rect x="234" y="296" width="5" height="5" fill="#9c1824"/><rect x="234" y="296" width="4" height="4" fill="#fb303f"/>
<rect x="257" y="296" width="5" height="5" fill="#9c1824"/><rect x="257" y="296" width="4" height="4" fill="#fb303f"/>
<rect x="284" y="294" width="5" height="5" fill="#9c1824"/><rect x="284" y="294" width="4" height="4" fill="#fb303f"/>
<rect x="194" y="302" width="5" height="5" fill="#9c1824"/><rect x="194" y="302" width="4" height="4" fill="#fb303f"/>
<rect x="241" y="305" width="5" height="5" fill="#9c1824"/><rect x="241" y="305" width="4" height="4" fill="#fb303f"/>
<rect x="282" y="309" width="5" height="5" fill="#9c1824"/><rect x="282" y="309" width="4" height="4" fill="#fb303f"/>
<rect x="180" y="312" width="5" height="5" fill="#9c1824"/><rect x="180" y="312" width="4" height="4" fill="#fb303f"/>
<rect x="242" y="313" width="5" height="5" fill="#9c1824"/><rect x="242" y="313" width="4" height="4" fill="#fb303f"/>
<rect x="248" y="313" width="5" height="5" fill="#9c1824"/><rect x="248" y="313" width="4" height="4" fill="#fb303f"/>
<rect x="256" y="311" width="5" height="5" fill="#9c1824"/><rect x="256" y="311" width="4" height="4" fill="#fb303f"/>
<rect x="154" y="316" width="5" height="5" fill="#9c1824"/><rect x="154" y="316" width="4" height="4" fill="#fb303f"/>
<rect x="169" y="317" width="5" height="5" fill="#9c1824"/><rect x="169" y="317" width="4" height="4" fill="#fb303f"/>
<rect x="215" y="317" width="5" height="5" fill="#9c1824"/><rect x="215" y="317" width="4" height="4" fill="#fb303f"/>
<rect x="290" y="319" width="5" height="5" fill="#9c1824"/><rect x="290" y="319" width="4" height="4" fill="#fb303f"/>
<rect x="203" y="331" width="5" height="5" fill="#9c1824"/><rect x="203" y="331" width="4" height="4" fill="#fb303f"/>
<rect x="234" y="331" width="5" height="5" fill="#9c1824"/><rect x="234" y="331" width="4" height="4" fill="#fb303f"/>
<rect x="242" y="331" width="5" height="5" fill="#9c1824"/><rect x="242" y="331" width="4" height="4" fill="#fb303f"/>
<rect x="127" y="337" width="5" height="5" fill="#9c1824"/><rect x="127" y="337" width="4" height="4" fill="#fb303f"/>
<rect x="195" y="340" width="5" height="5" fill="#9c1824"/><rect x="195" y="340" width="4" height="4" fill="#fb303f"/>
<rect x="280" y="338" width="5" height="5" fill="#9c1824"/><rect x="280" y="338" width="4" height="4" fill="#fb303f"/>
<rect x="141" y="342" width="5" height="5" fill="#9c1824"/><rect x="141" y="342" width="4" height="4" fill="#fb303f"/>
<rect x="214" y="342" width="5" height="5" fill="#9c1824"/><rect x="214" y="342" width="4" height="4" fill="#fb303f"/>
<rect x="263" y="342" width="5" height="5" fill="#9c1824"/><rect x="263" y="342" width="4" height="4" fill="#fb303f"/>
<rect x="124" y="310" width="5" height="5" fill="#9c1824"/><rect x="124" y="310" width="4" height="4" fill="#fb303f"/>
<rect x="104" y="308" width="5" height="5" fill="#9c1824"/><rect x="104" y="308" width="4" height="4" fill="#fb303f"/>
<rect x="90" y="320" width="5" height="5" fill="#9c1824"/><rect x="90" y="320" width="4" height="4" fill="#fb303f"/>
<rect x="116" y="319" width="5" height="5" fill="#9c1824"/><rect x="116" y="319" width="4" height="4" fill="#fb303f"/>
<rect x="52" y="328" width="5" height="5" fill="#9c1824"/><rect x="52" y="328" width="4" height="4" fill="#fb303f"/>
<rect x="73" y="326" width="5" height="5" fill="#9c1824"/><rect x="73" y="326" width="4" height="4" fill="#fb303f"/>
<rect x="106" y="334" width="5" height="5" fill="#9c1824"/><rect x="106" y="334" width="4" height="4" fill="#fb303f"/>
<rect x="73" y="343" width="5" height="5" fill="#9c1824"/><rect x="73" y="343" width="4" height="4" fill="#fb303f"/>
<rect x="85" y="340" width="5" height="5" fill="#9c1824"/><rect x="85" y="340" width="4" height="4" fill="#fb303f"/>
<rect x="95" y="340" width="5" height="5" fill="#9c1824"/><rect x="95" y="340" width="4" height="4" fill="#fb303f"/>
<rect x="90" y="344" width="5" height="5" fill="#9c1824"/><rect x="90" y="344" width="4" height="4" fill="#fb303f"/>
<rect x="113" y="341" width="5" height="5" fill="#9c1824"/><rect x="113" y="341" width="4" height="4" fill="#fb303f"/>
<rect x="67" y="352" width="5" height="5" fill="#9c1824"/><rect x="67" y="352" width="4" height="4" fill="#fb303f"/>
<rect x="142" y="355" width="5" height="5" fill="#9c1824"/><rect x="142" y="355" width="4" height="4" fill="#fb303f"/>
<rect x="59" y="362" width="5" height="5" fill="#9c1824"/><rect x="59" y="362" width="4" height="4" fill="#fb303f"/>
<rect x="147" y="363" width="5" height="5" fill="#9c1824"/><rect x="147" y="363" width="4" height="4" fill="#fb303f"/>
<rect x="93" y="367" width="5" height="5" fill="#9c1824"/><rect x="93" y="367" width="4" height="4" fill="#fb303f"/>
<rect x="130" y="367" width="5" height="5" fill="#9c1824"/><rect x="130" y="367" width="4" height="4" fill="#fb303f"/>
<rect x="112" y="370" width="5" height="5" fill="#9c1824"/><rect x="112" y="370" width="4" height="4" fill="#fb303f"/>
<rect x="86" y="372" width="5" height="5" fill="#9c1824"/><rect x="86" y="372" width="4" height="4" fill="#fb303f"/>
<rect x="84" y="382" width="5" height="5" fill="#9c1824"/><rect x="84" y="382" width="4" height="4" fill="#fb303f"/>
<rect x="79" y="390" width="5" height="5" fill="#9c1824"/><rect x="79" y="390" width="4" height="4" fill="#fb303f"/>
<rect x="74" y="398" width="5" height="5" fill="#9c1824"/><rect x="74" y="398" width="4" height="4" fill="#fb303f"/>
<rect x="126" y="396" width="5" height="5" fill="#9c1824"/><rect x="126" y="396" width="4" height="4" fill="#fb303f"/>
<rect x="89" y="420" width="5" height="5" fill="#9c1824"/><rect x="89" y="420" width="4" height="4" fill="#fb303f"/>
<rect x="106" y="421" width="5" height="5" fill="#9c1824"/><rect x="106" y="421" width="4" height="4" fill="#fb303f"/>
<rect x="116" y="420" width="5" height="5" fill="#9c1824"/><rect x="116" y="420" width="4" height="4" fill="#fb303f"/>
<rect x="77" y="428" width="5" height="5" fill="#9c1824"/><rect x="77" y="428" width="4" height="4" fill="#fb303f"/>
<rect x="86" y="436" width="5" height="5" fill="#9c1824"/><rect x="86" y="436" width="4" height="4" fill="#fb303f"/>
<rect x="111" y="437" width="5" height="5" fill="#9c1824"/><rect x="111" y="437" width="4" height="4" fill="#fb303f"/>
<rect x="75" y="446" width="5" height="5" fill="#9c1824"/><rect x="75" y="446" width="4" height="4" fill="#fb303f"/>
<rect x="296" y="340" width="5" height="5" fill="#9c1824"/><rect x="296" y="340" width="4" height="4" fill="#fb303f"/>
<rect x="308" y="337" width="5" height="5" fill="#9c1824"/><rect x="308" y="337" width="4" height="4" fill="#fb303f"/>
<rect x="313" y="337" width="5" height="5" fill="#9c1824"/><rect x="313" y="337" width="4" height="4" fill="#fb303f"/>
<rect x="319" y="339" width="5" height="5" fill="#9c1824"/><rect x="319" y="339" width="4" height="4" fill="#fb303f"/>
<rect x="238" y="346" width="5" height="5" fill="#9c1824"/><rect x="238" y="346" width="4" height="4" fill="#fb303f"/>
<rect x="313" y="343" width="5" height="5" fill="#9c1824"/><rect x="313" y="343" width="4" height="4" fill="#fb303f"/>
<rect x="308" y="348" width="5" height="5" fill="#9c1824"/><rect x="308" y="348" width="4" height="4" fill="#fb303f"/>
<rect x="318" y="348" width="5" height="5" fill="#9c1824"/><rect x="318" y="348" width="4" height="4" fill="#fb303f"/>
<rect x="282" y="353" width="5" height="5" fill="#9c1824"/><rect x="282" y="353" width="4" height="4" fill="#fb303f"/>
<rect x="177" y="356" width="5" height="5" fill="#9c1824"/><rect x="177" y="356" width="4" height="4" fill="#fb303f"/>
<rect x="214" y="367" width="5" height="5" fill="#9c1824"/><rect x="214" y="367" width="4" height="4" fill="#fb303f"/>
<rect x="251" y="367" width="5" height="5" fill="#9c1824"/><rect x="251" y="367" width="4" height="4" fill="#fb303f"/>
<rect x="170" y="373" width="5" height="5" fill="#9c1824"/><rect x="170" y="373" width="4" height="4" fill="#fb303f"/>
<rect x="237" y="374" width="5" height="5" fill="#9c1824"/><rect x="237" y="374" width="4" height="4" fill="#fb303f"/>
<rect x="285" y="374" width="5" height="5" fill="#9c1824"/><rect x="285" y="374" width="4" height="4" fill="#fb303f"/>
<rect x="188" y="385" width="5" height="5" fill="#9c1824"/><rect x="188" y="385" width="4" height="4" fill="#fb303f"/>
<rect x="305" y="385" width="5" height="5" fill="#9c1824"/><rect x="305" y="385" width="4" height="4" fill="#fb303f"/>
<rect x="334" y="336" width="5" height="5" fill="#9c1824"/><rect x="334" y="336" width="4" height="4" fill="#fb303f"/>
<rect x="354" y="335" width="5" height="5" fill="#9c1824"/><rect x="354" y="335" width="4" height="4" fill="#fb303f"/>
<rect x="378" y="336" width="5" height="5" fill="#9c1824"/><rect x="378" y="336" width="4" height="4" fill="#fb303f"/>
<rect x="426" y="336" width="5" height="5" fill="#9c1824"/><rect x="426" y="336" width="4" height="4" fill="#fb303f"/>
<rect x="399" y="339" width="5" height="5" fill="#9c1824"/><rect x="399" y="339" width="4" height="4" fill="#fb303f"/>
<rect x="413" y="340" width="5" height="5" fill="#9c1824"/><rect x="413" y="340" width="4" height="4" fill="#fb303f"/>
<rect x="353" y="344" width="5" height="5" fill="#9c1824"/><rect x="353" y="344" width="4" height="4" fill="#fb303f"/>
<rect x="364" y="350" width="5" height="5" fill="#9c1824"/><rect x="364" y="350" width="4" height="4" fill="#fb303f"/>
<rect x="448" y="352" width="5" height="5" fill="#9c1824"/><rect x="448" y="352" width="4" height="4" fill="#fb303f"/>
<rect x="504" y="335" width="5" height="5" fill="#9c1824"/><rect x="504" y="335" width="4" height="4" fill="#fb303f"/>
<rect x="505" y="339" width="5" height="5" fill="#9c1824"/><rect x="505" y="339" width="4" height="4" fill="#fb303f"/>
<rect x="484" y="346" width="5" height="5" fill="#9c1824"/><rect x="484" y="346" width="4" height="4" fill="#fb303f"/>
<rect x="315" y="318" width="5" height="5" fill="#7474c8"/><rect x="315" y="318" width="4" height="4" fill="#e2e2ff"/>
<rect x="303" y="322" width="5" height="5" fill="#7474c8"/><rect x="303" y="322" width="4" height="4" fill="#e2e2ff"/>
<rect x="315" y="328" width="5" height="5" fill="#7474c8"/><rect x="315" y="328" width="4" height="4" fill="#e2e2ff"/>
</g>
</svg>
 <div class="abs" id="split"></div>
 <div class="abs" id="log"></div>
 <div class="abs" id="side"></div>
 <div class="abs" id="banner"><i></i><b>人事<span style="letter-spacing:-3.3px">フェイズ</span></b></div>
 <div class="lbl" style="left:799px;top:109px">資金残高</div>
 <div class="lbl" style="left:870px;top:109px;letter-spacing:-.7px">4762030</div>
 <div class="btn" style="left:799px;top:124px;width:186px;height:25px;line-height:23px;letter-spacing:-1.5px">コマンド終了</div>
 <div class="lbl" style="left:799px;top:153px">選択国情報</div>
 <div class="abs" id="info">
  <div style="top:4px">国名</div><div style="top:19px">鉄砲生産</div><div style="top:34px">石高</div>
  <div style="top:49px">経済</div><div style="top:64px">鉱山</div><div style="top:79px">貿易港</div>
 </div>
 <div class="btn" style="left:799px;top:267px;width:93px;height:23px;border-color:#e5762d;box-shadow:inset 1px 1px 0 #fff,inset -1px -1px 0 #6d6d6d">捕虜処遇</div>
 <div class="btn" style="left:893px;top:267px;width:92px;height:22px">捕虜交換</div>
 <div class="btn" style="left:799px;top:291px;width:92px;height:22px">客将招請</div>
 <div class="btn" style="left:893px;top:291px;width:92px;height:22px">人質処遇</div>
 <div class="btn" style="left:799px;top:415px;width:92px;height:22px">軍船一覧</div>
 <div class="btn" style="left:893px;top:415px;width:92px;height:22px">交易船一覧</div>
 <div class="btn" style="left:799px;top:439px;width:92px;height:22px">武将一覧</div>
 <div class="btn" style="left:893px;top:439px;width:92px;height:22px">大名家一覧</div>
 <div class="lbl" style="left:799px;top:502px;letter-spacing:-1.3px">大名家リスト</div>
 <div class="abs" style="left:907px;top:502px;width:12px;height:12px;box-sizing:border-box;background:#fff;border:1px solid;border-color:#8a8a8a #fff #fff #8a8a8a;box-shadow:inset 1px 1px 0 #5a5a5a"></div>
 <div class="lbl" style="left:925px;top:502px;letter-spacing:-.2px">色分け表示</div>
 <div class="abs" id="list">
  <div class="hd" style="left:1px;width:73px"></div>
  <div class="hd" style="left:74px;width:92px"><span style="position:absolute;left:-1px;top:1px;line-height:12px;letter-spacing:-1px">（臣従含）</span></div>
  <div class="row" style="top:18px"><i></i><span class="nm">徳川家</span><span class="kk">1935万9000石</span></div>
  <div class="row" style="top:35px"><span class="nm">前田家</span><span class="kk">113万0000石</span></div>
  <div class="row" style="top:52px"><span class="nm">島津家</span><span class="kk">76万8000石</span></div>
  <div class="row" style="top:69px"><span class="nm">尾張徳...</span><span class="kk">65万8000石</span></div>
  <div class="row" style="top:86px"><i style="background:#ff7f40"></i><span class="nm">豊臣家</span><span class="kk">65万0000石</span></div>
  <div class="row" style="top:103px"><span class="nm">駿河徳...</span><span class="kk">61万4000石</span></div>
  <div class="row" style="top:120px"><span class="nm">相馬家</span><span class="kk">60万0000石</span></div>
  <div class="row" style="top:137px"><span class="nm">蒲生家</span><span class="kk">60万0000石</span></div>
  <div class="row" style="top:154px"><span class="nm">越後松...</span><span class="kk">59万8000石</span></div>
 </div>
 <div class="abs" id="sb"><em></em>
  <svg class="abs" style="left:0;top:0" width="18" height="167" viewBox="0 0 18 167"><g fill="none" stroke="#404040" stroke-width="1.6"><path d="M5 11.5 L9 7.5 L13 11.5"/><path d="M5 155.5 L9 159.5 L13 155.5"/></g></svg>
 </div>
</div></div>
</body>
</html>
